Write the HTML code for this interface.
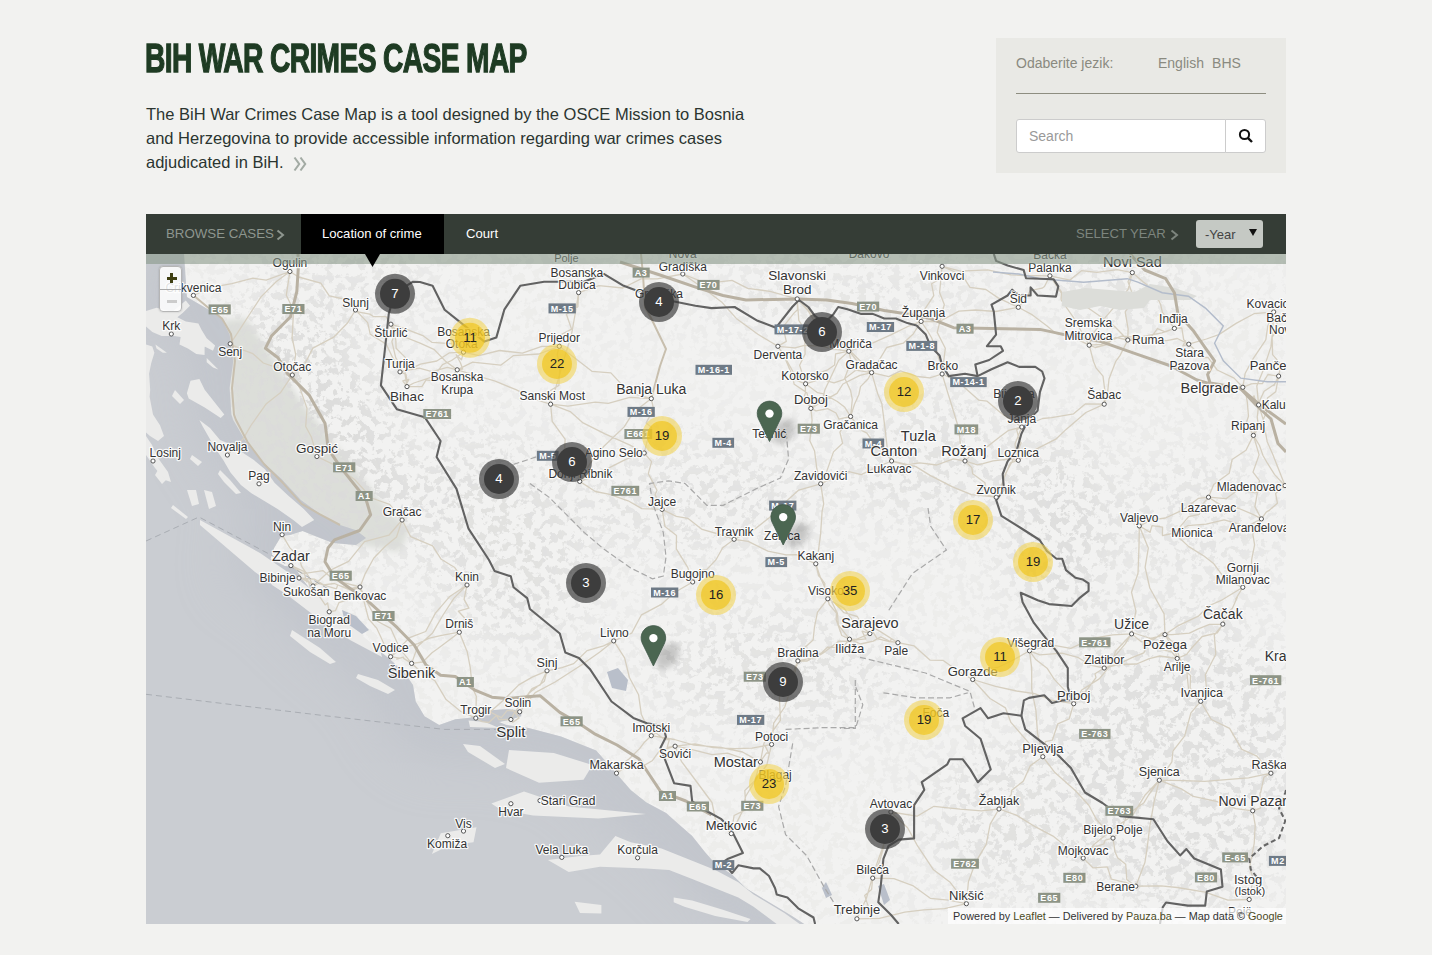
<!DOCTYPE html>
<html><head><meta charset="utf-8">
<style>
*{margin:0;padding:0;box-sizing:border-box}
html,body{width:1432px;height:955px;overflow:hidden;background:#f2f2f0;font-family:"Liberation Sans",sans-serif}
#title{position:absolute;left:145px;top:36px;font-size:40px;font-weight:bold;color:#1e3b23;letter-spacing:-0.9px;-webkit-text-stroke:1.3px #1e3b23;transform:scaleX(0.705);transform-origin:0 0;white-space:nowrap}
#intro{position:absolute;left:146px;top:102px;width:700px;font-size:16.5px;line-height:24px;color:#2b3530}
#intro .more{color:#aaa;font-size:20px;margin-left:6px}
#panel{position:absolute;left:996px;top:38px;width:290px;height:135px;background:#e9e9e5}
#lang{position:absolute;left:20px;top:17px;font-size:14px;color:#8a8a80}
#langs{position:absolute;left:162px;top:17px;font-size:14px;color:#8a8a80;word-spacing:4.3px}
#rule{position:absolute;left:20px;top:55px;width:250px;height:1px;background:#8d8d80}
#search{position:absolute;left:20px;top:81px;width:210px;height:34px;background:#fff;border:1px solid #ccc;border-radius:3px 0 0 3px;font-size:14px;color:#999;padding:8px 0 0 12px}
#sbtn{position:absolute;left:229px;top:81px;width:41px;height:34px;background:#fff;border:1px solid #ccc;border-radius:0 3px 3px 0}
#nav{position:absolute;left:146px;top:214px;width:1140px;height:40px;background:#353d36}
#nav .t{position:absolute;top:0;height:40px;line-height:40px;font-size:14px;white-space:nowrap}
#map{position:absolute;left:146px;top:254px;width:1140px;height:670px;background:#efefed;overflow:hidden}
#mapsvg{position:absolute;left:0;top:0;font-family:"Liberation Sans",sans-serif}
.lb{fill:#333;stroke:#fff;stroke-width:2.5px;stroke-opacity:0.85;paint-order:stroke;stroke-linejoin:round}
#band{position:absolute;left:0;top:0;width:1140px;height:10px;background:rgba(135,150,135,0.58)}
#attr{position:absolute;left:802px;top:654px;width:338px;height:16px;background:rgba(255,255,255,0.7);font-size:10.85px;line-height:16px;color:#333;padding-left:5px;white-space:nowrap}
#attr a{color:#4a4a1e;text-decoration:none}
</style></head><body>
<div id="title">BIH WAR CRIMES CASE MAP</div>
<div id="intro">The BiH War Crimes Case Map is a tool designed by the OSCE Mission to Bosnia<br>and Herzegovina to provide accessible information regarding war crimes cases<br>adjudicated in BiH.</div>
<svg style="position:absolute;left:293px;top:156px" width="16" height="17"><polyline points="1.5,1.5 6.2,8 1.5,14.5" fill="none" stroke="#a3aba4" stroke-width="2.1"/><polyline points="7.5,1.5 12.2,8 7.5,14.5" fill="none" stroke="#a3aba4" stroke-width="2.1"/></svg>
<div id="panel">
<div id="lang">Odaberite jezik:</div>
<div id="langs">English BHS</div>
<div id="rule"></div>
<div id="search">Search</div>
<div id="sbtn"><svg style="position:absolute;left:12px;top:8px" width="16" height="16"><circle cx="6.5" cy="6.5" r="4.6" fill="none" stroke="#111" stroke-width="2"/><line x1="9.8" y1="9.8" x2="14" y2="14" stroke="#111" stroke-width="2.4"/></svg></div>
</div>
<div id="nav">
<div class="t" style="left:20px;color:#8e968f;font-size:13.3px">BROWSE CASES</div>
<svg style="position:absolute;left:130px;top:15px" width="9" height="12"><polyline points="1.5,1.5 7,6 1.5,10.5" fill="none" stroke="#8e968f" stroke-width="2"/></svg>
<div style="position:absolute;left:155px;top:0;width:143px;height:40px;background:#000"></div>
<div class="t" style="left:176px;color:#fff;font-size:13.1px">Location of crime</div>
<div class="t" style="left:320px;color:#fff;font-size:13.1px">Court</div>
<div class="t" style="left:930px;color:#7d857e;font-size:13.1px">SELECT YEAR</div>
<svg style="position:absolute;left:1024px;top:15px" width="9" height="12"><polyline points="1.5,1.5 7,6 1.5,10.5" fill="none" stroke="#7d857e" stroke-width="2"/></svg>
<div style="position:absolute;left:1050px;top:6px;width:67px;height:28px;background:#c5c9c4;border-radius:3px;"></div>
<div class="t" style="left:1059px;color:#444;font-size:13px;top:1px">-Year</div>
<svg style="position:absolute;left:1103px;top:14px" width="9" height="9"><polygon points="0,1 8,1 4,8" fill="#111"/></svg>
</div>
<svg style="position:absolute;left:365px;top:254px;z-index:5" width="16" height="14"><polygon points="0,0 15,0 7.5,13" fill="#000"/></svg>
<div id="map">
<svg id="mapsvg" width="1140" height="670" viewBox="146 254 1140 670">
<defs>
<filter id="blur20" x="-20%" y="-20%" width="140%" height="140%"><feGaussianBlur stdDeviation="28"/></filter>
<filter id="blur8" x="-20%" y="-20%" width="140%" height="140%"><feGaussianBlur stdDeviation="10"/></filter>
<filter id="shadow" x="-50%" y="-50%" width="200%" height="200%"><feGaussianBlur stdDeviation="3"/></filter>
<filter id="terr" x="0" y="0" width="100%" height="100%" color-interpolation-filters="sRGB">
  <feTurbulence type="fractalNoise" baseFrequency="0.12" numOctaves="4" seed="5" result="n"/>
  <feColorMatrix in="n" type="matrix" values="0 0 0 0 0.86  0 0 0 0 0.86  0 0 0 0 0.855  14 0 0 0 -7.0"/>
</filter>
<filter id="mblur" x="-50%" y="-50%" width="200%" height="200%"><feGaussianBlur stdDeviation="25"/></filter>
<mask id="tmask" maskUnits="userSpaceOnUse" x="146" y="254" width="1140" height="670" color-interpolation="sRGB"><rect x="146" y="254" width="1140" height="670" fill="#3c3c3c"/><g filter="url(#mblur)"><ellipse cx="320" cy="430" rx="70" ry="130" fill="#f0f0f0" transform="rotate(-30 320 430)"/><ellipse cx="340" cy="290" rx="90" ry="40" fill="#999" transform="rotate(0 340 290)"/><ellipse cx="500" cy="540" rx="80" ry="110" fill="#bbb" transform="rotate(-30 500 540)"/><ellipse cx="700" cy="500" rx="120" ry="50" fill="#aaa" transform="rotate(0 700 500)"/><ellipse cx="770" cy="670" rx="120" ry="60" fill="#aaa" transform="rotate(0 770 670)"/><ellipse cx="930" cy="460" rx="90" ry="60" fill="#aaa" transform="rotate(0 930 460)"/><ellipse cx="1060" cy="530" rx="50" ry="90" fill="#ddd" transform="rotate(0 1060 530)"/><ellipse cx="1170" cy="760" rx="130" ry="150" fill="#c8c8c8" transform="rotate(0 1170 760)"/><ellipse cx="1020" cy="820" rx="90" ry="70" fill="#bbb" transform="rotate(0 1020 820)"/><ellipse cx="1120" cy="295" rx="60" ry="25" fill="#ccc" transform="rotate(0 1120 295)"/><ellipse cx="850" cy="295" rx="140" ry="28" fill="#999" transform="rotate(0 850 295)"/><ellipse cx="1200" cy="520" rx="80" ry="60" fill="#999" transform="rotate(0 1200 520)"/><ellipse cx="1180" cy="262" rx="120" ry="18" fill="#111" transform="rotate(0 1180 262)"/><ellipse cx="650" cy="380" rx="110" ry="35" fill="#222" transform="rotate(0 650 380)"/><ellipse cx="800" cy="355" rx="90" ry="22" fill="#222" transform="rotate(0 800 355)"/></g></mask>
<clipPath id="landclip"><polygon points="184.0,254.0 186.9,297.1 199.4,304.2 220.7,316.7 229.6,334.5 233.2,361.2 229.6,387.9 231.4,414.6 233.2,420.0 245.7,441.4 261.7,460.9 281.3,478.7 300.8,500.1 320.4,514.3 340.0,525.0 356.0,530.3 366.0,538.0 356.0,545.0 333.0,543.0 315.0,536.0 302.6,531.0 290.0,535.0 281.3,536.0 274.1,548.1 270.6,558.8 284.8,565.9 294.9,567.3 302.2,579.0 314.0,593.7 328.6,608.4 343.3,621.5 357.9,633.3 372.6,645.0 390.2,659.6 404.0,672.0 413.0,685.0 415.7,701.6 424.5,716.2 439.2,725.0 455.3,719.2 470.0,717.7 489.0,710.4 506.6,709.0 521.2,710.4 521.2,716.2 506.6,720.6 499.0,722.0 506.6,725.0 528.6,728.0 540.0,731.0 561.0,736.4 596.2,750.4 630.7,790.0 646.1,802.3 666.1,813.0 679.9,825.3 692.2,836.1 704.5,851.5 715.2,863.7 732.1,874.5 746.0,888.3 761.3,897.5 776.7,906.8 792.0,916.0 804.3,924.0 1286.0,924.0 1286.0,254.0"/></clipPath>
<clipPath id="seaclip"><polygon points="184.0,254.0 186.9,297.1 199.4,304.2 220.7,316.7 229.6,334.5 233.2,361.2 229.6,387.9 231.4,414.6 233.2,420.0 245.7,441.4 261.7,460.9 281.3,478.7 300.8,500.1 320.4,514.3 340.0,525.0 356.0,530.3 366.0,538.0 356.0,545.0 333.0,543.0 315.0,536.0 302.6,531.0 290.0,535.0 281.3,536.0 274.1,548.1 270.6,558.8 284.8,565.9 294.9,567.3 302.2,579.0 314.0,593.7 328.6,608.4 343.3,621.5 357.9,633.3 372.6,645.0 390.2,659.6 404.0,672.0 413.0,685.0 415.7,701.6 424.5,716.2 439.2,725.0 455.3,719.2 470.0,717.7 489.0,710.4 506.6,709.0 521.2,710.4 521.2,716.2 506.6,720.6 499.0,722.0 506.6,725.0 528.6,728.0 540.0,731.0 561.0,736.4 596.2,750.4 630.7,790.0 646.1,802.3 666.1,813.0 679.9,825.3 692.2,836.1 704.5,851.5 715.2,863.7 732.1,874.5 746.0,888.3 761.3,897.5 776.7,906.8 792.0,916.0 804.3,924.0 146.0,924.0 146.0,254.0"/></clipPath>
</defs>
<rect x="146" y="254" width="1140" height="670" fill="#f2f2f1"/>
<polygon points="222.0,320.0 246.0,318.0 268.0,350.0 300.0,400.0 340.0,450.0 380.0,500.0 410.0,530.0 400.0,552.0 360.0,545.0 320.0,520.0 280.0,490.0 250.0,460.0 232.0,420.0 228.0,370.0" fill="#dcded9" filter="url(#shadow)"/>
<g clip-path="url(#landclip)" mask="url(#tmask)"><rect x="146" y="254" width="1140" height="670" filter="url(#terr)"/></g>
<polygon points="184.0,254.0 186.9,297.1 199.4,304.2 220.7,316.7 229.6,334.5 233.2,361.2 229.6,387.9 231.4,414.6 233.2,420.0 245.7,441.4 261.7,460.9 281.3,478.7 300.8,500.1 320.4,514.3 340.0,525.0 356.0,530.3 366.0,538.0 356.0,545.0 333.0,543.0 315.0,536.0 302.6,531.0 290.0,535.0 281.3,536.0 274.1,548.1 270.6,558.8 284.8,565.9 294.9,567.3 302.2,579.0 314.0,593.7 328.6,608.4 343.3,621.5 357.9,633.3 372.6,645.0 390.2,659.6 404.0,672.0 413.0,685.0 415.7,701.6 424.5,716.2 439.2,725.0 455.3,719.2 470.0,717.7 489.0,710.4 506.6,709.0 521.2,710.4 521.2,716.2 506.6,720.6 499.0,722.0 506.6,725.0 528.6,728.0 540.0,731.0 561.0,736.4 596.2,750.4 630.7,790.0 646.1,802.3 666.1,813.0 679.9,825.3 692.2,836.1 704.5,851.5 715.2,863.7 732.1,874.5 746.0,888.3 761.3,897.5 776.7,906.8 792.0,916.0 804.3,924.0 146.0,924.0 146.0,254.0" fill="#cacdd2"/>
<g clip-path="url(#seaclip)"><polyline points="184.0,254.0 186.9,297.1 199.4,304.2 220.7,316.7 229.6,334.5 233.2,361.2 229.6,387.9 231.4,414.6 233.2,420.0 245.7,441.4 261.7,460.9 281.3,478.7 300.8,500.1 320.4,514.3 340.0,525.0 356.0,530.3 366.0,538.0 356.0,545.0 333.0,543.0 315.0,536.0 302.6,531.0 290.0,535.0 281.3,536.0 274.1,548.1 270.6,558.8 284.8,565.9 294.9,567.3 302.2,579.0 314.0,593.7 328.6,608.4 343.3,621.5 357.9,633.3 372.6,645.0 390.2,659.6 404.0,672.0 413.0,685.0 415.7,701.6 424.5,716.2 439.2,725.0 455.3,719.2 470.0,717.7 489.0,710.4 506.6,709.0 521.2,710.4 521.2,716.2 506.6,720.6 499.0,722.0 506.6,725.0 528.6,728.0 540.0,731.0 561.0,736.4 596.2,750.4 630.7,790.0 646.1,802.3 666.1,813.0 679.9,825.3 692.2,836.1 704.5,851.5 715.2,863.7 732.1,874.5 746.0,888.3 761.3,897.5 776.7,906.8 792.0,916.0 804.3,924.0" fill="none" stroke="#b9bdc6" stroke-width="70" filter="url(#blur20)" opacity="0.5"/></g>
<polygon points="146.0,310.9 156.5,307.8 172.2,312.0 185.8,300.5 190.0,305.7 182.6,313.0 177.4,317.2 185.8,321.4 198.4,323.5 201.5,329.8 206.7,338.2 215.1,345.5 213.0,350.7 204.6,346.5 204.6,354.9 196.3,353.9 187.9,348.6 179.5,344.5 180.6,337.1 174.3,336.1 161.7,336.1 152.3,331.9 146.0,326.6" fill="#ebebea"/>
<polygon points="146.0,344.5 152.3,346.5 154.4,352.8 151.2,363.3 149.1,373.8 150.2,390.0 149.6,396.8 153.0,414.6 160.0,425.3 164.0,435.9 158.0,441.0 150.0,436.0 146.0,432.4" fill="#ebebea"/>
<polygon points="155.4,344.5 166.9,352.8 162.8,352.8 156.5,348.6" fill="#ebebea"/>
<polygon points="206.7,358.1 218.3,369.6 213.0,367.5 206.7,362.3" fill="#ebebea"/>
<polygon points="201.0,341.0 206.0,343.0 204.0,348.0" fill="#ebebea"/>
<polygon points="175.0,390.0 184.0,400.0 180.0,404.0 172.0,396.0" fill="#ebebea"/>
<polygon points="192.0,455.0 202.0,462.0 198.0,466.0 190.0,459.0" fill="#ebebea"/>
<polygon points="158.0,470.0 166.0,480.0 162.0,484.0 155.0,475.0" fill="#ebebea"/>
<polygon points="146.0,436.0 152.0,445.0 158.0,458.0 168.0,472.0 171.0,482.0 165.0,480.0 155.0,468.0 146.0,455.0" fill="#ebebea"/>
<polygon points="190.5,380.8 199.4,379.0 204.7,389.7 224.3,414.6 220.7,418.1 204.7,407.5 188.7,398.6 186.9,393.2" fill="#ebebea"/>
<polygon points="199.4,420.0 210.0,428.0 220.0,439.9 232.6,445.1 240.9,451.4 253.5,459.8 265.0,469.2 274.5,482.8 288.1,495.4 303.8,509.0 314.2,520.0 302.0,527.0 293.3,520.0 277.6,509.0 261.9,499.6 251.4,493.3 240.9,484.9 230.5,472.4 223.1,459.8 215.0,448.0 203.0,427.1" fill="#ebebea"/>
<polygon points="220.0,470.0 230.0,480.0 241.0,493.0 236.0,494.0 224.0,482.0 218.0,474.0" fill="#ebebea"/>
<polygon points="173.0,505.0 188.0,517.0 186.0,519.0 171.0,508.0" fill="#ebebea"/>
<polygon points="187.0,490.0 196.0,490.0 199.0,504.0 192.0,506.0" fill="#ebebea"/>
<polygon points="204.0,490.0 212.0,492.0 216.0,506.0 209.0,509.0" fill="#ebebea"/>
<polygon points="200.0,520.0 260.0,553.0 292.0,575.0 336.0,608.0 355.0,630.0 380.0,650.0 382.0,657.0 350.0,640.0 320.0,620.0 290.0,597.0 255.0,572.0 200.0,525.0" fill="#ebebea"/>
<polygon points="262.0,555.0 290.0,575.0 314.0,598.0 352.0,622.0 364.0,636.0 358.0,638.0 330.0,622.0 300.0,603.0 272.0,585.0 258.0,562.0" fill="#ebebea"/>
<polygon points="292.0,630.0 320.0,648.0 336.0,662.0 330.0,664.0 310.0,652.0 290.0,636.0" fill="#ebebea"/>
<polygon points="358.0,674.0 378.0,680.0 395.0,690.0 388.0,694.0 370.0,686.0 356.0,678.0" fill="#ebebea"/>
<polygon points="468.5,720.6 485.0,722.0 499.3,728.0 470.0,727.0" fill="#ebebea"/>
<polygon points="463.0,744.0 480.0,746.0 505.0,764.0 495.0,768.0 468.0,752.0" fill="#ebebea"/>
<polygon points="509.0,750.0 553.8,753.0 592.5,765.0 583.5,779.8 539.0,782.7 506.0,768.0" fill="#ebebea"/>
<polygon points="491.4,803.5 524.0,791.6 568.7,806.5 646.0,814.0 598.4,818.4 533.0,815.5 500.3,809.5" fill="#ebebea"/>
<polygon points="440.8,833.3 476.5,827.3 473.5,842.2 449.7,845.2 431.9,854.0" fill="#ebebea"/>
<polygon points="547.9,860.0 580.0,856.0 600.0,854.5 615.4,836.1 630.7,842.2 661.5,848.4 692.2,860.7 715.2,869.9 738.3,882.2 753.6,894.5 769.0,903.7 784.4,912.9 799.7,924.0 776.7,924.0 753.6,906.8 738.3,897.5 715.2,888.3 692.2,879.1 669.1,869.9 646.1,868.4 600.0,866.8 568.7,872.0" fill="#ebebea"/>
<polygon points="673.7,897.5 692.2,900.6 722.9,909.8 750.6,919.0 747.5,922.1 715.2,916.0 684.5,906.8 673.7,902.2" fill="#ebebea"/>
<polygon points="574.6,901.7 601.4,905.0 601.4,913.6 580.0,913.0" fill="#ebebea"/>
<path d="M1021.8,427.0 L1008.7,430.3 1000.6,436.3 988.1,446.1 971.9,454.3 965.0,461.0 M475.8,718.1 L480.0,716.2 489.1,711.5 501.4,717.6 507.2,710.3 519.7,711.8 M1089.2,345.2 L1093.5,361.5 1096.0,367.8 1103.0,376.1 1104.8,390.3 1104.2,404.2 M1278.6,376.1 L1267.9,374.5 1262.4,383.7 1253.9,383.6 1251.3,383.8 1242.8,387.3 M871.6,372.6 L859.9,375.4 842.9,384.0 837.0,393.4 821.2,402.1 810.9,408.4 M360.0,587.0 L353.4,590.0 350.6,598.9 339.0,602.6 335.6,610.6 329.2,611.8 M1131.6,633.9 L1128.4,638.6 1125.4,643.7 1114.3,656.9 1106.2,661.1 1104.2,668.0 M390.9,324.2 L399.6,335.0 420.1,343.2 434.4,349.7 445.9,361.6 457.2,369.8 M1159.3,780.2 L1144.9,795.3 1132.3,815.8 1113.4,828.6 1094.0,844.5 1083.2,858.1 M1273.7,311.9 L1272.2,335.4 1270.9,346.9 1263.5,369.4 1256.8,385.9 1258.6,404.9 M675.1,746.2 L659.2,751.1 652.2,760.8 643.1,766.0 626.0,767.0 616.5,773.2 M290.9,565.6 L303.3,573.7 323.1,570.7 329.1,575.8 343.5,582.6 360.0,587.0 M550.6,404.2 L570.2,411.6 583.1,422.9 605.5,434.1 630.0,445.1 644.2,453.0 M1174.4,328.4 L1165.2,331.9 1157.5,328.6 1150.4,338.2 1140.9,340.7 1127.8,340.0 M797.2,298.9 L811.0,312.6 823.0,329.7 837.5,338.8 853.8,354.5 871.6,372.6 M289.9,271.5 L276.4,281.5 261.0,296.9 250.1,313.5 237.4,333.1 230.2,343.8 M1132.3,272.6 L1117.0,269.7 1096.9,272.4 1081.5,270.7 1069.9,280.1 1049.9,275.8 M1222.8,624.1 L1217.3,632.9 1202.2,636.5 1192.1,647.5 1186.6,654.4 1177.2,658.5 M1165.0,634.6 L1151.1,638.5 1143.8,652.8 1132.0,657.7 1119.5,663.7 1104.2,668.0 M400.0,371.9 L406.0,374.3 407.2,382.7 408.8,379.4 402.8,380.9 407.0,386.6 M848.8,351.2 L850.3,352.5 859.2,363.8 865.9,363.8 868.6,371.3 871.6,372.6 M1049.9,275.8 L1024.2,275.5 1010.9,274.8 987.7,269.9 960.4,271.1 942.1,266.3 M1021.8,427.0 L1015.0,444.0 1016.3,454.0 1005.5,473.6 1003.6,479.9 996.2,497.2 M869.9,633.6 L862.1,631.2 865.8,638.9 854.1,640.2 858.4,639.7 849.5,639.2 M519.7,711.8 L516.4,713.8 512.5,710.0 519.1,717.9 512.9,722.3 510.9,719.5 M1278.6,376.1 L1273.9,385.6 1273.9,384.7 1264.1,391.3 1260.0,400.0 1258.6,404.9 M360.0,587.0 L363.7,600.1 368.6,619.0 376.9,628.4 385.3,646.8 390.6,656.7 M475.8,718.1 L489.2,712.8 504.3,699.5 518.8,684.9 532.2,677.1 547.0,670.8 M1242.8,587.3 L1222.3,599.8 1208.4,606.0 1198.4,616.2 1178.8,625.3 1165.0,634.6 M1208.5,497.2 L1219.6,504.4 1225.7,506.5 1237.7,508.0 1253.5,514.6 1261.4,518.9 M856.9,918.8 L879.4,918.4 904.8,912.2 923.7,909.8 944.6,908.6 966.4,903.7 M1159.3,780.2 L1154.1,801.7 1149.7,827.0 1147.2,847.6 1144.9,862.6 1135.8,886.2 M682.8,274.0 L706.3,283.4 732.0,280.3 747.7,288.4 770.0,291.3 797.2,298.9 M550.6,404.2 L552.2,421.3 565.1,439.1 564.6,452.7 575.5,462.4 579.7,481.4 M457.2,369.8 L451.0,377.8 434.3,381.0 426.1,379.8 421.9,386.6 407.0,386.6 M355.5,310.0 L359.2,312.2 369.8,314.1 373.7,316.7 386.0,316.6 390.9,324.2 M965.0,461.0 L971.8,467.6 972.7,473.8 985.0,482.8 985.6,494.8 996.2,497.2 M1083.2,858.1 L1092.9,867.8 1107.4,866.9 1111.3,879.2 1126.0,882.6 1135.8,886.2 M1222.8,624.1 L1214.3,635.1 1215.8,654.2 1205.3,674.8 1206.5,688.9 1200.7,701.3 M510.9,719.5 L514.0,713.3 521.0,703.6 532.1,688.7 540.3,684.8 547.0,670.8 M999.0,809.0 L990.2,824.2 986.2,844.3 975.5,862.4 968.4,881.8 966.4,903.7 M1113.0,838.1 L1105.2,840.2 1103.7,844.0 1095.1,846.9 1087.6,849.3 1083.2,858.1 M1104.2,404.2 L1085.2,403.9 1073.6,413.8 1051.7,417.6 1042.6,418.5 1021.8,427.0 M299.0,578.0 L314.4,579.1 323.4,584.9 334.5,583.5 349.7,590.0 360.0,587.0 M1089.2,345.2 L1095.3,347.5 1106.7,344.5 1111.4,340.6 1115.6,337.3 1127.8,340.0 M869.9,633.6 L851.2,641.5 838.7,641.2 822.5,653.4 816.0,657.1 797.9,660.9 M777.9,346.3 L781.3,351.2 786.9,360.9 791.1,368.3 797.7,380.9 805.6,383.8 M942.1,266.3 L962.1,275.0 970.0,287.4 985.9,289.5 998.1,297.9 1018.3,307.3 M1253.4,435.4 L1259.5,445.5 1263.0,455.5 1267.4,463.2 1274.6,474.6 1285.0,485.6 M820.7,483.8 L798.8,490.1 784.1,503.3 769.6,517.4 753.9,529.8 734.1,539.3 M1278.6,376.1 L1275.7,391.8 1267.4,398.1 1268.3,408.2 1260.7,425.0 1253.4,435.4 M1131.6,633.9 L1115.5,651.2 1112.4,663.1 1099.2,678.9 1081.7,690.0 1073.7,703.7 M1270.9,773.2 L1248.6,777.9 1229.3,779.3 1204.8,781.3 1183.4,780.7 1159.3,780.2 M1273.7,311.9 L1254.0,313.7 1236.1,323.4 1218.8,334.6 1206.4,339.0 1188.8,344.2 M942.1,374.0 L947.9,393.2 951.2,403.8 958.8,428.7 960.4,444.0 965.0,461.0 M850.6,416.5 L861.2,430.2 866.9,433.1 875.0,445.0 886.1,453.3 891.6,461.0 M1127.8,340.0 L1141.4,336.6 1148.7,339.2 1166.8,340.6 1177.3,338.5 1188.8,344.2 M771.6,744.4 L765.0,745.6 768.8,753.4 766.6,752.9 762.8,758.1 760.4,762.0 M559.3,346.3 L557.2,354.1 559.8,366.5 558.9,385.4 547.5,392.2 550.6,404.2 M1042.8,756.7 L1030.4,765.6 1023.4,781.0 1011.5,790.6 1011.2,794.7 999.0,809.0 M411.6,663.4 L423.0,673.6 435.0,680.8 446.1,699.6 460.8,711.5 475.8,718.1 M848.8,351.2 L838.7,360.3 833.7,371.0 824.8,390.1 822.3,400.1 810.9,408.4 M849.5,639.2 L860.5,644.0 873.3,641.1 880.7,636.8 890.5,641.5 897.9,642.7 M942.1,266.3 L940.4,278.8 931.6,283.8 933.8,295.6 925.0,308.8 921.1,321.4 M1270.9,773.2 L1263.9,777.3 1260.7,792.3 1260.0,793.0 1260.4,808.2 1252.7,810.8 M1029.5,650.8 L1031.7,668.4 1031.7,689.1 1035.9,710.3 1037.5,733.1 1042.8,756.7 M289.9,271.5 L298.6,277.0 320.8,283.2 329.3,295.9 346.0,299.5 355.5,310.0 M467.0,585.0 L449.4,596.8 435.4,613.1 425.7,631.5 409.6,637.6 390.6,656.7 M850.6,416.5 L839.9,432.1 842.6,443.2 833.5,451.9 825.6,474.6 820.7,483.8 M972.7,679.5 L990.0,698.5 1005.5,707.9 1010.9,722.4 1029.0,743.1 1042.8,756.7 M1132.3,272.6 L1128.1,289.3 1116.5,304.3 1106.0,316.7 1093.2,333.5 1089.2,345.2 M1042.8,756.7 L1054.9,772.6 1075.5,790.7 1088.8,805.3 1096.3,819.3 1113.0,838.1 M402.1,520.0 L388.9,535.2 364.5,541.6 348.6,561.3 330.0,570.4 313.0,586.0 M805.6,383.8 L817.6,392.7 823.6,393.9 837.3,401.5 844.8,407.3 850.6,416.5 M891.6,461.0 L874.6,468.2 861.2,474.6 849.0,471.6 832.1,478.4 820.7,483.8 M1073.7,703.7 L1069.2,718.8 1057.8,723.8 1052.3,740.2 1045.4,741.6 1042.8,756.7 M1131.6,633.9 L1133.9,633.0 1148.9,638.0 1154.0,639.3 1162.6,632.8 1165.0,634.6 M1242.8,587.3 L1235.7,599.0 1237.3,597.3 1232.4,608.2 1225.5,615.1 1222.8,624.1 M519.7,711.8 L535.2,692.6 555.1,682.0 580.7,665.5 599.5,652.2 613.7,640.9 M1159.3,780.2 L1148.6,795.0 1144.0,802.7 1127.0,814.7 1121.0,830.7 1113.0,838.1 M1104.2,668.0 L1095.0,673.8 1096.0,677.6 1085.0,692.5 1082.5,692.0 1073.7,703.7 M290.9,565.6 L290.7,565.3 303.9,571.3 306.6,581.8 307.0,579.6 313.0,586.0 M1174.4,328.4 L1161.9,332.9 1137.9,337.3 1121.4,336.2 1101.3,344.4 1089.2,345.2 M797.2,298.9 L797.5,309.7 793.9,313.1 783.0,327.1 786.3,341.4 777.9,346.3 M827.8,598.8 L835.1,603.3 843.9,612.7 857.3,616.5 864.5,629.0 869.9,633.6 M771.6,744.4 L766.8,765.0 756.6,778.4 745.6,796.5 742.2,811.6 731.3,833.6 M1127.8,340.0 L1120.1,355.4 1115.8,361.3 1109.0,379.0 1107.2,396.2 1104.2,404.2 M1188.8,344.2 L1203.4,357.7 1208.0,357.3 1217.2,370.0 1234.1,378.1 1242.8,387.3 M313.0,586.0 L313.6,590.3 320.7,598.1 325.2,604.9 327.6,602.9 329.2,611.8 M613.7,640.9 L624.6,657.8 629.4,677.5 638.6,694.8 641.3,714.2 651.3,735.7 M1200.7,701.3 L1211.3,719.5 1229.6,728.3 1241.8,749.4 1256.9,756.1 1270.9,773.2 M651.3,398.6 L653.5,409.0 646.1,423.1 651.5,427.3 646.6,443.3 644.2,453.0 M400.0,371.9 L408.6,370.2 419.3,368.1 431.9,371.6 447.3,367.3 457.2,369.8 M848.8,351.2 L829.7,348.5 822.2,346.1 804.4,345.3 795.0,347.8 777.9,346.3 M1021.8,427.0 L1016.7,429.7 1019.4,440.8 1021.1,442.9 1015.6,455.6 1018.3,460.3 M1258.6,404.9 L1263.0,418.9 1267.2,441.7 1272.6,454.0 1278.3,468.6 1285.0,485.6 M1139.3,525.9 L1150.0,532.3 1152.0,525.7 1162.6,527.2 1162.4,535.6 1174.4,533.0 M475.8,718.1 L482.1,721.6 488.9,722.5 496.5,715.6 499.0,719.7 510.9,719.5 M760.4,762.0 L754.8,780.6 744.8,790.5 746.0,809.6 734.1,815.5 731.3,833.6 M890.9,812.0 L917.0,816.2 934.0,806.3 960.0,809.1 981.4,810.8 999.0,809.0 M1252.7,810.8 L1255.2,825.1 1254.2,843.5 1249.6,867.5 1253.2,878.6 1249.2,899.5 M692.7,582.0 L674.1,592.8 661.3,604.4 641.5,614.8 631.7,633.1 613.7,640.9 M1029.5,650.8 L1039.9,654.9 1062.0,653.1 1077.7,657.3 1090.3,665.1 1104.2,668.0 M682.8,274.0 L657.2,278.9 641.0,278.8 622.9,288.0 599.0,285.7 578.6,292.6 M897.9,642.7 L914.2,645.9 930.2,660.2 942.9,660.3 957.8,670.9 972.7,679.5 M1174.4,328.4 L1181.8,327.9 1183.7,339.7 1185.4,341.0 1182.9,345.9 1188.8,344.2 M797.2,298.9 L798.8,320.4 804.7,329.5 805.1,354.1 799.6,365.3 805.6,383.8 M578.6,292.6 L575.6,311.5 571.4,335.0 565.0,356.0 556.2,386.1 550.6,404.2 M827.8,598.8 L829.2,604.5 836.5,613.2 836.2,619.9 841.8,635.5 849.5,639.2 M965.0,461.0 L977.5,464.8 983.0,463.6 993.1,460.9 1009.0,459.0 1018.3,460.3 M292.3,375.0 L300.2,388.9 307.0,408.4 305.7,426.5 311.4,437.0 316.9,456.5 M872.7,878.1 L893.9,878.7 913.4,885.9 930.3,898.3 948.5,900.2 966.4,903.7 M299.0,578.0 L299.9,574.6 299.9,577.7 308.6,582.1 310.3,588.4 313.0,586.0 M651.3,398.6 L633.3,412.4 624.2,426.9 603.4,446.8 590.1,463.4 579.7,481.4 M810.9,408.4 L816.1,410.9 827.7,408.7 836.0,413.0 839.0,419.2 850.6,416.5 M869.9,633.6 L872.9,631.9 877.1,638.6 890.4,641.9 891.3,638.5 897.9,642.7 M1261.4,518.9 L1252.8,534.0 1254.6,544.8 1251.7,559.4 1250.9,576.0 1242.8,587.3 M1113.0,838.1 L1115.0,851.8 1117.6,857.7 1125.7,864.3 1126.8,879.4 1135.8,886.2 M644.2,453.0 L626.4,459.2 622.8,460.8 602.5,471.1 592.7,477.1 579.7,481.4 M519.7,711.8 L528.3,700.3 528.7,693.4 531.6,691.1 544.4,681.2 547.0,670.8 M1029.5,650.8 L1013.2,660.0 1009.2,661.9 997.8,667.5 981.3,669.8 972.7,679.5 M871.6,372.6 L855.7,370.2 843.6,379.6 834.0,382.8 820.9,379.2 805.6,383.8 M390.9,324.2 L406.0,329.2 422.8,335.6 432.1,342.4 453.6,343.8 463.5,352.2 M459.3,632.2 L453.6,636.7 437.6,648.8 432.0,652.8 422.8,662.0 411.6,663.4 M771.6,744.4 L752.0,748.2 735.0,748.7 713.1,747.7 695.1,743.9 675.1,746.2 M559.3,346.3 L574.8,358.0 591.9,371.3 610.9,372.9 629.0,392.4 651.3,398.6 M871.6,372.6 L879.9,358.8 886.7,347.5 903.2,343.2 913.2,334.0 921.1,321.4 M827.8,598.8 L817.5,612.1 814.5,626.8 813.1,640.0 799.5,652.2 797.9,660.9 M1249.2,899.5 L1227.9,900.1 1205.2,892.1 1177.2,887.5 1161.1,885.9 1135.8,886.2 M355.5,310.0 L347.5,323.0 333.7,337.2 312.9,348.1 304.3,364.7 292.3,375.0 M890.9,812.0 L885.7,827.3 884.0,835.6 883.6,847.6 879.5,861.6 872.7,878.1 M457.2,369.8 L472.6,362.1 500.7,365.2 513.5,355.6 538.8,354.0 559.3,346.3 M734.1,539.3 L722.7,547.8 716.0,559.7 706.9,569.4 698.8,570.6 692.7,582.0 M651.3,735.7 L674.4,739.5 694.0,745.2 720.7,747.3 742.5,752.0 760.4,762.0 M1177.2,658.5 L1179.0,664.7 1190.6,675.6 1190.1,688.0 1193.3,692.3 1200.7,701.3 M1174.4,533.0 L1188.4,546.4 1204.3,556.2 1213.9,563.8 1225.7,579.9 1242.8,587.3 M1253.4,435.4 L1246.0,450.2 1232.1,459.5 1229.2,473.3 1213.7,484.5 1208.5,497.2 M644.2,453.0 L651.6,461.7 648.3,473.6 657.0,490.3 655.1,494.7 662.1,509.4 M1029.5,650.8 L1035.8,659.6 1047.4,668.6 1054.3,679.4 1069.6,695.4 1073.7,703.7 M1049.9,275.8 L1061.5,293.3 1077.1,300.3 1101.5,317.3 1114.6,326.5 1127.8,340.0 M1018.3,307.3 L995.8,311.5 975.5,310.0 958.9,311.1 939.5,321.5 921.1,321.4 M682.8,274.0 L703.8,288.5 722.2,302.6 736.3,318.4 757.9,334.2 777.9,346.3 M1285.0,485.6 L1273.8,487.2 1255.1,492.7 1238.3,489.8 1226.0,498.7 1208.5,497.2 M972.7,679.5 L995.6,686.3 1016.6,691.0 1034.7,693.6 1051.6,700.1 1073.7,703.7 M675.1,746.2 L688.1,748.6 712.0,754.7 727.6,753.2 742.6,758.4 760.4,762.0 M1139.3,525.9 L1139.0,546.6 1138.0,573.4 1131.5,592.2 1135.9,611.2 1131.6,633.9 M579.7,481.4 L595.3,491.5 609.8,494.4 628.1,500.8 641.8,508.6 662.1,509.4 M805.6,383.8 L805.2,384.3 805.5,392.6 803.9,397.7 809.0,405.5 810.9,408.4 M651.3,398.6 L629.7,397.4 608.3,403.3 595.3,402.2 567.9,406.1 550.6,404.2 M1104.2,404.2 L1085.9,412.5 1066.1,429.4 1055.8,439.2 1035.2,449.7 1018.3,460.3 M999.0,809.0 L1016.3,815.1 1036.0,827.2 1053.0,836.1 1065.1,845.8 1083.2,858.1 M810.9,408.4 L812.1,420.3 809.8,440.8 814.6,451.1 816.8,468.5 820.7,483.8 M463.5,352.2 L451.5,360.5 442.5,364.6 433.9,376.4 413.9,383.0 407.0,386.6 M1253.4,435.4 L1259.1,454.9 1253.0,472.1 1259.5,480.6 1254.9,506.7 1261.4,518.9 M890.9,812.0 L907.6,827.8 917.1,845.1 933.5,869.8 949.8,881.9 966.4,903.7 M1159.3,780.2 L1182.0,789.2 1193.3,796.4 1216.4,801.4 1235.7,808.6 1252.7,810.8 M871.6,372.6 L868.0,379.0 860.5,386.6 858.9,394.5 854.5,404.2 850.6,416.5 M1018.3,307.3 L1032.4,314.9 1047.1,326.1 1055.9,333.4 1074.7,338.2 1089.2,345.2 M390.9,324.2 L395.8,340.1 396.1,348.3 405.2,357.4 405.2,375.5 407.0,386.6 M1285.0,485.6 L1275.6,493.4 1277.4,503.2 1269.1,510.4 1266.2,512.1 1261.4,518.9 M1208.5,497.2 L1198.6,498.3 1183.0,509.9 1165.4,518.0 1151.8,519.9 1139.3,525.9 M1131.6,633.9 L1141.0,641.5 1146.9,643.1 1158.2,649.2 1171.3,651.5 1177.2,658.5 M613.7,640.9 L603.6,645.9 587.1,650.6 573.7,663.6 561.9,667.7 547.0,670.8 M1222.8,624.1 L1209.5,624.4 1197.7,629.2 1189.5,633.2 1172.0,634.7 1165.0,634.6 M1139.3,525.9 L1148.3,548.1 1145.1,567.4 1149.8,588.0 1164.1,613.9 1165.0,634.6 M282.1,534.7 L289.9,547.9 298.6,556.3 301.8,566.7 308.8,576.7 313.0,586.0 M797.9,660.9 L794.4,674.7 789.1,693.9 784.7,707.0 773.7,723.1 771.6,744.4 M1165.0,634.6 L1170.2,643.5 1171.4,642.8 1175.5,651.8 1175.4,651.3 1177.2,658.5 M815.8,563.8 L820.6,578.1 827.5,593.3 837.4,613.4 838.3,624.8 849.5,639.2 M848.8,351.2 L835.6,353.9 834.6,365.0 827.1,370.2 809.4,376.2 805.6,383.8 M1049.9,275.8 L1044.5,286.5 1042.1,288.2 1030.1,290.7 1026.1,298.1 1018.3,307.3 M1018.3,460.3 L1010.4,462.8 1004.5,476.9 1001.3,487.1 996.5,493.5 996.2,497.2 M871.6,372.6 L877.7,393.8 881.9,403.8 884.9,427.7 887.2,447.6 891.6,461.0 M942.1,266.3 L939.6,292.5 944.3,304.5 937.2,332.4 945.3,348.3 942.1,374.0 M360.0,587.0 L368.4,604.6 377.3,621.2 390.8,628.4 400.0,648.9 411.6,663.4 M848.8,351.2 L862.6,347.0 874.2,342.3 890.8,334.8 907.9,326.5 921.1,321.4 M1208.5,497.2 L1200.5,507.2 1199.3,514.4 1188.7,516.6 1176.8,530.6 1174.4,533.0 M872.7,878.1 L871.6,889.5 864.7,895.4 868.0,905.8 861.1,908.7 856.9,918.8 M891.6,461.0 L905.6,464.9 919.7,462.8 936.7,465.0 953.4,458.8 965.0,461.0 M675.1,746.2 L681.4,761.3 696.8,782.0 712.0,802.5 715.5,819.5 731.3,833.6 M871.6,372.6 L888.8,376.6 900.5,370.9 917.4,376.5 929.8,377.9 942.1,374.0 M1200.7,701.3 L1190.9,712.9 1184.7,735.8 1172.9,751.1 1171.9,761.8 1159.3,780.2 M292.3,375.0 L280.4,392.8 266.0,404.1 250.9,425.5 243.3,438.6 227.4,455.0 M289.9,271.5 L286.3,295.3 293.6,310.2 292.1,337.6 295.7,354.5 292.3,375.0 M662.1,509.4 L676.3,516.3 687.8,518.3 702.1,529.4 718.3,534.0 734.1,539.3 M797.9,660.9 L789.4,681.3 779.4,696.8 780.4,720.3 764.0,743.1 760.4,762.0 M1165.0,634.6 L1175.0,644.5 1180.3,659.7 1186.6,669.8 1188.9,692.9 1200.7,701.3 M457.2,369.8 L479.5,376.5 495.2,381.2 516.0,389.7 536.4,400.0 550.6,404.2 M1261.4,518.9 L1247.2,526.4 1224.1,519.9 1206.2,524.2 1187.6,525.7 1174.4,533.0 M463.5,352.2 L478.9,355.6 499.4,350.5 522.4,353.2 541.8,346.4 559.3,346.3 M942.1,374.0 L957.5,381.2 978.6,400.1 987.1,401.2 1003.4,414.9 1021.8,427.0 M820.7,483.8 L823.7,503.8 822.1,511.3 820.6,533.9 818.2,552.7 815.8,563.8 M1242.8,387.3 L1241.5,387.3 1251.7,398.7 1254.0,395.8 1256.4,404.0 1258.6,404.9 M459.3,632.2 L441.6,635.3 429.4,638.2 417.9,643.6 401.7,648.2 390.6,656.7 M1273.7,311.9 L1278.3,328.6 1272.1,337.1 1272.6,354.7 1281.0,364.5 1278.6,376.1 M1104.2,668.0 L1118.3,664.5 1136.6,664.0 1149.3,658.7 1159.8,656.0 1177.2,658.5 M827.8,598.8 L844.0,608.1 852.3,620.1 867.5,624.3 880.4,631.6 897.9,642.7 M891.6,461.0 L915.9,466.6 930.1,475.4 952.5,486.8 971.4,494.7 996.2,497.2 M289.9,271.5 L266.2,280.2 253.0,278.2 231.8,283.7 210.3,287.6 193.4,295.4 M467.0,585.0 L464.1,599.4 468.9,608.1 458.4,611.2 464.8,618.3 459.3,632.2 M1132.3,272.6 L1143.0,281.7 1153.9,290.1 1160.6,304.5 1162.4,312.3 1174.4,328.4 M355.5,310.0 L367.7,322.6 370.2,334.1 386.3,344.3 391.8,355.9 400.0,371.9 M662.1,509.4 L665.0,526.6 676.5,535.4 676.3,548.8 687.7,567.4 692.7,582.0 M734.1,539.3 L748.2,541.3 767.9,551.2 786.2,554.8 796.5,554.6 815.8,563.8 M921.1,321.4 L927.6,331.0 931.7,338.0 936.8,351.3 941.3,367.1 942.1,374.0 M651.3,735.7 L656.0,733.0 664.9,739.7 669.3,739.7 667.2,747.4 675.1,746.2 M463.5,352.2 L449.5,352.8 436.8,361.0 420.4,364.2 412.2,368.1 400.0,371.9 M402.1,520.0 L410.7,536.7 432.6,545.9 441.2,559.3 454.4,567.2 467.0,585.0 M848.8,351.2 L851.1,361.2 844.7,378.3 850.6,390.6 852.3,399.5 850.6,416.5 M1049.9,275.8 L1061.5,291.9 1061.1,299.8 1073.4,317.4 1079.1,327.5 1089.2,345.2 M777.9,346.3 L783.6,355.1 792.0,374.8 794.2,384.3 806.8,392.6 810.9,408.4 M849.5,639.2 L842.4,647.9 827.7,647.1 821.9,652.5 807.2,661.0 797.9,660.9 M390.9,324.2 L395.5,332.1 391.9,341.6 395.7,357.6 401.2,366.5 400.0,371.9 M578.6,292.6 L577.9,306.8 566.4,314.3 571.6,329.2 560.7,334.8 559.3,346.3 M1242.8,387.3 L1246.2,395.6 1247.3,402.2 1248.5,416.2 1246.5,422.2 1253.4,435.4 M459.3,632.2 L467.3,652.1 470.3,667.9 472.3,687.6 476.3,696.3 475.8,718.1 M1131.6,633.9 L1112.6,634.9 1092.5,638.4 1070.8,648.3 1051.1,644.9 1029.5,650.8 M1273.7,311.9 L1267.7,326.3 1265.8,339.9 1253.2,358.6 1245.2,373.2 1242.8,387.3 M390.6,656.7 L399.4,658.2 396.7,659.0 403.5,657.2 403.6,658.4 411.6,663.4 M230.2,343.8 L240.6,349.1 252.9,353.7 263.3,363.0 283.3,369.9 292.3,375.0 M797.2,298.9 L808.2,310.9 814.9,321.9 827.8,330.8 839.6,340.4 848.8,351.2 M467.0,585.0 L454.0,598.1 442.1,616.5 432.6,632.9 417.8,646.2 411.6,663.4 M1132.3,272.6 L1128.0,281.7 1134.2,299.0 1125.2,311.9 1128.1,328.9 1127.8,340.0 M313.0,586.0 L318.5,583.5 336.4,588.8 337.7,585.0 349.1,588.6 360.0,587.0 M890.9,812.0 L886.9,835.4 881.4,851.0 874.2,871.1 866.4,898.3 856.9,918.8 M1258.6,404.9 L1257.5,415.6 1257.2,416.3 1258.3,426.9 1255.5,428.1 1253.4,435.4 M651.3,735.7 L643.9,742.8 639.6,748.6 629.3,758.8 622.3,763.9 616.5,773.2 M402.1,520.0 L396.6,536.9 385.3,546.2 373.7,558.2 364.9,574.4 360.0,587.0 M316.9,456.5 L334.8,465.1 355.2,480.1 371.5,498.0 389.6,504.3 402.1,520.0 M463.5,352.2 L461.5,359.8 456.1,354.7 460.4,362.7 462.7,369.0 457.2,369.8 M815.8,563.8 L818.6,575.8 820.8,578.0 824.9,583.7 824.0,592.7 827.8,598.8" fill="none" stroke="#d6cfc0" stroke-width="1.3" stroke-linejoin="round"/>
<polygon points="1062.0,292.0 1085.0,288.0 1110.0,290.0 1135.0,292.0 1150.0,284.0 1175.0,288.0 1197.0,296.0 1190.0,300.0 1150.0,300.0 1144.0,308.0 1120.0,310.0 1100.0,306.0 1080.0,310.0 1062.0,306.0" fill="#dcddd9"/>
<polyline points="993.0,272.0 1019.0,274.0 1040.0,278.7 1083.6,282.2 1127.3,278.7 1137.8,282.2 1162.2,292.7 1188.4,296.2 1205.8,308.4 1223.3,325.9 1214.6,343.3 1223.3,360.8 1240.8,378.2 1267.0,381.7 1286.0,381.7" fill="none" stroke="#b3bccb" stroke-width="1.4"/>
<polygon points="607.0,672.0 618.0,668.0 628.0,680.0 626.0,691.0 612.0,688.0" fill="#b9bfca"/>
<polygon points="878.0,886.0 884.0,884.0 890.0,900.0 884.0,905.0" fill="#b9bfca"/>
<polygon points="342.0,610.0 356.0,616.0 369.0,630.0 362.0,634.0 345.0,622.0" fill="#b9bfca"/>
<polygon points="822.0,888.0 826.0,882.0 832.0,895.0 826.0,898.0" fill="#b9bfca"/>
<polyline points="193.0,295.0 208.0,307.5 222.0,318.5 231.0,334.0 235.0,361.0 232.0,388.0 234.0,414.6 236.0,420.0 247.5,442.0 264.0,464.0 282.8,482.8 301.7,503.8 319.5,514.2 340.0,525.0" fill="none" stroke="#c8bfae" stroke-width="2" stroke-linejoin="round"/>
<polyline points="651.3,398.6 660.0,366.0 666.0,349.0 652.0,320.0 645.0,307.0 643.0,275.0 641.0,254.0" fill="none" stroke="#c8bfae" stroke-width="2" stroke-linejoin="round"/>
<polyline points="298.0,254.0 298.4,266.6 296.8,291.7 290.5,316.8 271.7,335.7 265.4,348.3 278.0,357.7 287.4,373.4 309.4,395.4 325.1,423.6 328.2,448.8 340.8,467.6 365.9,499.0 370.6,514.8 359.6,530.5 334.5,539.9 328.0,548.0 325.0,561.7 334.5,577.4 366.0,599.4 397.3,627.7 414.2,645.0 426.0,665.0 440.6,675.2 455.3,676.6 474.3,689.8 491.9,697.2 506.6,698.6 521.2,697.2 540.0,695.7 559.8,712.4 578.9,723.3 595.2,734.2 617.0,745.0 638.8,758.7 649.6,775.0 660.5,791.4 685.8,801.0 711.5,815.0" fill="none" stroke="#b9b1a2" stroke-width="3" stroke-linejoin="round"/>
<polyline points="620.0,262.0 660.0,275.0 700.0,288.6 723.0,295.5 746.0,300.0 796.8,298.9 826.7,300.0 852.0,303.5 884.3,310.5 907.4,313.9 930.4,318.5 953.5,327.7 1040.0,329.4 1064.4,334.6 1101.1,341.6 1136.0,353.8 1171.0,366.0 1197.0,380.0 1214.6,385.2 1240.8,388.7 1260.0,405.0 1286.0,424.0" fill="none" stroke="#b9b1a2" stroke-width="3" stroke-linejoin="round"/>
<polyline points="1130.0,254.0 1144.7,270.0 1165.7,278.7 1174.4,292.7 1177.9,313.6 1193.6,331.1 1205.8,348.6 1214.6,360.8 1207.6,374.7 1210.0,383.0 1240.0,388.0 1256.0,405.0 1271.0,419.0 1278.0,443.5 1286.0,452.0" fill="none" stroke="#b9b1a2" stroke-width="3" stroke-linejoin="round"/>
<polyline points="146,694.3 321.4,715.3 444.2,729.4 496.9,729.4" fill="none" stroke="#a9adb3" stroke-width="1" stroke-dasharray="6,4"/>
<polyline points="146,541 199,517 271,555 330,590" fill="none" stroke="#a9adb3" stroke-width="1" stroke-dasharray="6,4"/>
<polyline points="1286,790 1285.3,792.6 1279,808.3 1285.3,820.8 1279,838.1 1263.3,846 1249.2,858.5 1250.8,869.5 1257,877.4" fill="none" stroke="#666" stroke-width="2" stroke-dasharray="5,3"/>
<polyline points="513.5,464.4 529.9,459.0 538.0,456.3" fill="none" stroke="#a9a9a9" stroke-width="1.2" stroke-dasharray="6,3"/>
<polyline points="529.9,483.5 548.9,497.1 568.0,516.2 584.3,532.5 603.4,548.8 630.6,567.9 652.4,578.8 663.3,576.1 666.0,557.0 663.3,532.5 652.4,502.5 649.7,483.5 668.8,480.8 685.1,483.5 706.9,505.3 723.2,505.3 755.9,488.9 780.4,478.0 788.6,459.0 785.9,429.0" fill="none" stroke="#a9a9a9" stroke-width="1.2" stroke-dasharray="6,3"/>
<polyline points="928.0,508.0 930.7,526.4 946.4,550.0 912.4,573.5 888.8,610.2" fill="none" stroke="#a9a9a9" stroke-width="1.2" stroke-dasharray="6,3"/>
<polyline points="860.0,657.3 925.5,673.0 970.0,691.4 975.0,709.7" fill="none" stroke="#a9a9a9" stroke-width="1.2" stroke-dasharray="6,3"/>
<polyline points="855.3,680.0 855.3,728.5 840.0,728.5" fill="none" stroke="#a9a9a9" stroke-width="1.2" stroke-dasharray="6,3"/>
<polyline points="883.4,692.8 916.6,697.9 949.8,697.9 967.7,692.8" fill="none" stroke="#a9a9a9" stroke-width="1.2" stroke-dasharray="6,3"/>
<polyline points="785.6,729.4 824.2,727.6 855.8,727.6 862.8,704.8 855.8,687.2" fill="none" stroke="#a9a9a9" stroke-width="1.2" stroke-dasharray="6,3"/>
<polyline points="792.7,743.4 785.6,785.5 778.6,806.5 785.6,834.6 806.7,855.7 824.2,887.2 841.8,915.3" fill="none" stroke="#a9a9a9" stroke-width="1.2" stroke-dasharray="6,3"/>
<polyline points="394.8,293.0 388.8,313.7 384.9,349.5 380.9,385.3 396.8,409.2 424.7,417.2 440.6,441.0 436.6,457.0 456.5,488.9 468.5,528.7 489.0,560.0 494.5,570.9 510.8,576.3 513.5,587.2 527.2,598.1 529.9,609.0 559.8,633.5 565.3,652.5 578.9,658.0 589.8,668.9 611.5,701.5 633.3,717.9 646.9,723.3 663.2,726.0 666.0,736.9 660.5,747.8 674.1,783.2 690.5,785.9 692.2,801.5 707.5,811.5 721.4,819.2 730.6,828.4 742.9,853.0 727.5,859.1 722.9,862.2 732.1,873.0 738.3,865.3 753.6,868.4 759.8,868.4 769.0,876.0 775.1,888.3 776.7,894.5 787.4,897.5 798.2,908.3 813.5,917.5 815.1,924.0" fill="none" stroke="#626262" stroke-width="2.1" stroke-linejoin="round"/>
<polyline points="394.8,293.0 412.7,281.8 420.0,282.0 432.6,285.8 444.6,309.7 464.5,325.6 484.4,341.6 496.3,337.6 504.3,309.7 520.2,285.8 544.1,281.8 583.9,281.8 603.8,273.9 623.7,285.8 655.5,297.8 695.4,305.7 711.5,308.1 734.6,307.0 757.6,320.8 776.0,327.7 792.2,307.0 799.0,300.0 808.3,307.0 815.2,316.2 824.4,323.0 833.6,313.9 838.2,307.0 847.5,309.3 861.3,313.9 872.8,313.9 884.3,318.5 895.9,318.5 907.4,323.1 916.6,325.4 925.8,334.6 930.4,346.2 939.6,355.4 941.9,364.6 948.8,376.1 965.0,373.8 977.6,376.1 991.5,369.2 1007.6,362.3 1019.1,366.9 1035.3,366.9 1042.2,371.5 1044.5,378.4 1039.9,392.2 1037.6,410.7 1028.3,419.9 1021.4,433.7 1016.8,449.9 1007.6,461.4 1002.7,474.0 1004.0,489.7 996.2,500.2 1001.4,515.9 1022.4,529.0 1039.6,540.0 1047.1,551.3 1056.5,558.8 1062.2,558.8 1066.0,570.1 1075.4,577.7 1082.9,579.6 1088.6,583.3 1088.6,590.9 1079.1,598.4 1071.6,606.0 1049.0,604.1 1037.7,600.3 1020.7,592.8 1022.6,602.2 1033.9,622.9 1047.1,639.9 1056.5,651.2 1067.8,668.1 1067.8,687.0 1071.6,700.2 1062.2,700.4 1052.0,703.0 1044.3,695.3 1029.0,697.9 1023.9,700.4 1021.4,715.8 1003.5,713.2 988.1,718.3 980.5,708.1 962.6,718.3 965.2,726.0 980.5,738.7 990.7,769.4 977.9,782.2 970.3,769.4 962.6,759.2 949.8,759.2 947.3,764.3 921.7,782.2 924.3,789.8 914.1,805.2 914.1,838.4 898.7,839.6 888.5,846.0 883.4,858.8 880.9,884.3 878.3,902.2 891.1,915.0 898.7,924.0" fill="none" stroke="#626262" stroke-width="2.1" stroke-linejoin="round"/>
<polyline points="977.6,376.1 975.3,364.6 989.2,360.0 1003.0,350.8 1000.7,346.2 986.9,346.2 996.1,334.6 993.8,311.6 991.5,304.7 1007.6,295.5 1012.2,289.7 1019.1,295.5 1030.6,295.5 1030.6,287.4 1037.6,295.5 1056.0,296.6 1058.3,286.3 1053.7,279.3 1026.0,278.2 1023.7,270.1 1007.6,265.5 996.1,260.9 993.8,254.0" fill="none" stroke="#626262" stroke-width="2.1" stroke-linejoin="round"/>
<polyline points="1021.4,715.8 1025.3,729.4 1056.9,753.9 1070.9,768.0 1085.0,792.5 1102.5,803.0 1120.4,816.1 1153.4,819.3 1167.5,841.2 1180.1,855.4 1186.4,849.1 1194.2,858.5 1220.9,869.5 1222.5,886.8 1206.8,891.5 1205.2,905.6 1187.9,905.6 1166.0,902.5 1162.8,907.2 1160.0,924.0" fill="none" stroke="#626262" stroke-width="2.1" stroke-linejoin="round"/>
<rect x="208.6" y="304.4" width="22.2" height="10" fill="#8d9486"/>
<text x="219.7" y="312.7" font-size="9" font-weight="bold" letter-spacing="0.6" fill="#fff" text-anchor="middle">E65</text>
<rect x="282.3" y="304.0" width="22.2" height="10" fill="#8d9486"/>
<text x="293.4" y="312.3" font-size="9" font-weight="bold" letter-spacing="0.6" fill="#fff" text-anchor="middle">E71</text>
<rect x="423.3" y="409.0" width="27.8" height="10" fill="#8d9486"/>
<text x="437.2" y="417.3" font-size="9" font-weight="bold" letter-spacing="0.6" fill="#fff" text-anchor="middle">E761</text>
<rect x="333.1" y="462.3" width="22.2" height="10" fill="#8d9486"/>
<text x="344.2" y="470.6" font-size="9" font-weight="bold" letter-spacing="0.6" fill="#fff" text-anchor="middle">E71</text>
<rect x="355.6" y="491.0" width="17.1" height="10" fill="#8d9486"/>
<text x="364.2" y="499.3" font-size="9" font-weight="bold" letter-spacing="0.6" fill="#fff" text-anchor="middle">A1</text>
<rect x="329.6" y="570.7" width="22.2" height="10" fill="#8d9486"/>
<text x="340.7" y="579.0" font-size="9" font-weight="bold" letter-spacing="0.6" fill="#fff" text-anchor="middle">E65</text>
<rect x="632.6" y="267.6" width="17.1" height="10" fill="#8d9486"/>
<text x="641.1" y="275.9" font-size="9" font-weight="bold" letter-spacing="0.6" fill="#fff" text-anchor="middle">A3</text>
<rect x="697.4" y="279.9" width="22.2" height="10" fill="#8d9486"/>
<text x="708.5" y="288.2" font-size="9" font-weight="bold" letter-spacing="0.6" fill="#fff" text-anchor="middle">E70</text>
<rect x="857.0" y="301.6" width="22.2" height="10" fill="#8d9486"/>
<text x="868.1" y="309.9" font-size="9" font-weight="bold" letter-spacing="0.6" fill="#fff" text-anchor="middle">E70</text>
<rect x="548.5" y="303.4" width="27.3" height="10" fill="#6e7a86"/>
<text x="562.1" y="311.7" font-size="9" font-weight="bold" letter-spacing="0.6" fill="#fff" text-anchor="middle">M-15</text>
<rect x="774.5" y="324.4" width="36.5" height="10" fill="#6e7a86"/>
<text x="792.7" y="332.7" font-size="9" font-weight="bold" letter-spacing="0.6" fill="#fff" text-anchor="middle">M-17-2</text>
<rect x="866.8" y="322.0" width="27.3" height="10" fill="#6e7a86"/>
<text x="880.4" y="330.3" font-size="9" font-weight="bold" letter-spacing="0.6" fill="#fff" text-anchor="middle">M-17</text>
<rect x="695.5" y="364.8" width="36.5" height="10" fill="#6e7a86"/>
<text x="713.7" y="373.1" font-size="9" font-weight="bold" letter-spacing="0.6" fill="#fff" text-anchor="middle">M-16-1</text>
<rect x="627.5" y="406.9" width="27.3" height="10" fill="#6e7a86"/>
<text x="641.1" y="415.2" font-size="9" font-weight="bold" letter-spacing="0.6" fill="#fff" text-anchor="middle">M-16</text>
<rect x="797.7" y="423.7" width="22.2" height="10" fill="#8d9486"/>
<text x="808.8" y="432.0" font-size="9" font-weight="bold" letter-spacing="0.6" fill="#fff" text-anchor="middle">E73</text>
<rect x="624.4" y="429.0" width="27.8" height="10" fill="#8d9486"/>
<text x="638.3" y="437.3" font-size="9" font-weight="bold" letter-spacing="0.6" fill="#fff" text-anchor="middle">E661</text>
<rect x="712.4" y="437.8" width="21.7" height="10" fill="#6e7a86"/>
<text x="723.2" y="446.1" font-size="9" font-weight="bold" letter-spacing="0.6" fill="#fff" text-anchor="middle">M-4</text>
<rect x="862.5" y="438.5" width="21.7" height="10" fill="#6e7a86"/>
<text x="873.4" y="446.8" font-size="9" font-weight="bold" letter-spacing="0.6" fill="#fff" text-anchor="middle">M-4</text>
<rect x="536.9" y="450.8" width="21.7" height="10" fill="#6e7a86"/>
<text x="547.8" y="459.1" font-size="9" font-weight="bold" letter-spacing="0.6" fill="#fff" text-anchor="middle">M-5</text>
<rect x="611.4" y="485.8" width="27.8" height="10" fill="#8d9486"/>
<text x="625.3" y="494.1" font-size="9" font-weight="bold" letter-spacing="0.6" fill="#fff" text-anchor="middle">E761</text>
<rect x="769.1" y="500.6" width="27.3" height="10" fill="#6e7a86"/>
<text x="782.8" y="508.9" font-size="9" font-weight="bold" letter-spacing="0.6" fill="#fff" text-anchor="middle">M-17</text>
<rect x="765.4" y="557.1" width="21.7" height="10" fill="#6e7a86"/>
<text x="776.2" y="565.4" font-size="9" font-weight="bold" letter-spacing="0.6" fill="#fff" text-anchor="middle">M-5</text>
<rect x="956.5" y="323.7" width="17.1" height="10" fill="#8d9486"/>
<text x="965.0" y="332.0" font-size="9" font-weight="bold" letter-spacing="0.6" fill="#fff" text-anchor="middle">A3</text>
<rect x="906.3" y="340.9" width="30.9" height="10" fill="#6e7a86"/>
<text x="921.8" y="349.2" font-size="9" font-weight="bold" letter-spacing="0.6" fill="#fff" text-anchor="middle">M-1-8</text>
<rect x="950.2" y="377.1" width="36.5" height="10" fill="#6e7a86"/>
<text x="968.5" y="385.4" font-size="9" font-weight="bold" letter-spacing="0.6" fill="#fff" text-anchor="middle">M-14-1</text>
<rect x="954.5" y="424.4" width="23.7" height="10" fill="#8d9486"/>
<text x="966.4" y="432.7" font-size="9" font-weight="bold" letter-spacing="0.6" fill="#fff" text-anchor="middle">M18</text>
<rect x="372.4" y="611.0" width="22.2" height="10" fill="#8d9486"/>
<text x="383.5" y="619.3" font-size="9" font-weight="bold" letter-spacing="0.6" fill="#fff" text-anchor="middle">E71</text>
<rect x="456.8" y="677.0" width="17.1" height="10" fill="#8d9486"/>
<text x="465.3" y="685.3" font-size="9" font-weight="bold" letter-spacing="0.6" fill="#fff" text-anchor="middle">A1</text>
<rect x="651.0" y="587.5" width="27.3" height="10" fill="#6e7a86"/>
<text x="664.6" y="595.8" font-size="9" font-weight="bold" letter-spacing="0.6" fill="#fff" text-anchor="middle">M-16</text>
<rect x="743.7" y="671.7" width="22.2" height="10" fill="#8d9486"/>
<text x="754.8" y="680.0" font-size="9" font-weight="bold" letter-spacing="0.6" fill="#fff" text-anchor="middle">E73</text>
<rect x="560.5" y="716.3" width="22.2" height="10" fill="#8d9486"/>
<text x="571.6" y="724.6" font-size="9" font-weight="bold" letter-spacing="0.6" fill="#fff" text-anchor="middle">E65</text>
<rect x="737.0" y="714.9" width="27.3" height="10" fill="#6e7a86"/>
<text x="750.6" y="723.2" font-size="9" font-weight="bold" letter-spacing="0.6" fill="#fff" text-anchor="middle">M-17</text>
<rect x="658.9" y="791.0" width="17.1" height="10" fill="#8d9486"/>
<text x="667.4" y="799.3" font-size="9" font-weight="bold" letter-spacing="0.6" fill="#fff" text-anchor="middle">A1</text>
<rect x="686.8" y="801.5" width="22.2" height="10" fill="#8d9486"/>
<text x="697.9" y="809.8" font-size="9" font-weight="bold" letter-spacing="0.6" fill="#fff" text-anchor="middle">E65</text>
<rect x="741.2" y="800.8" width="22.2" height="10" fill="#8d9486"/>
<text x="752.3" y="809.1" font-size="9" font-weight="bold" letter-spacing="0.6" fill="#fff" text-anchor="middle">E73</text>
<rect x="712.6" y="860.1" width="21.7" height="10" fill="#6e7a86"/>
<text x="723.5" y="868.4" font-size="9" font-weight="bold" letter-spacing="0.6" fill="#fff" text-anchor="middle">M-2</text>
<rect x="1079.1" y="637.3" width="31.4" height="10" fill="#8d9486"/>
<text x="1094.8" y="645.6" font-size="9" font-weight="bold" letter-spacing="0.6" fill="#fff" text-anchor="middle">E-761</text>
<rect x="1249.9" y="675.2" width="31.4" height="10" fill="#8d9486"/>
<text x="1265.6" y="683.5" font-size="9" font-weight="bold" letter-spacing="0.6" fill="#fff" text-anchor="middle">E-761</text>
<rect x="1079.1" y="728.9" width="31.4" height="10" fill="#8d9486"/>
<text x="1094.8" y="737.2" font-size="9" font-weight="bold" letter-spacing="0.6" fill="#fff" text-anchor="middle">E-763</text>
<rect x="1105.4" y="805.8" width="27.8" height="10" fill="#8d9486"/>
<text x="1119.3" y="814.1" font-size="9" font-weight="bold" letter-spacing="0.6" fill="#fff" text-anchor="middle">E763</text>
<rect x="1222.2" y="852.4" width="25.8" height="10" fill="#8d9486"/>
<text x="1235.1" y="860.7" font-size="9" font-weight="bold" letter-spacing="0.6" fill="#fff" text-anchor="middle">E-65</text>
<rect x="1268.9" y="855.9" width="18.1" height="10" fill="#6e7a86"/>
<text x="1277.9" y="864.2" font-size="9" font-weight="bold" letter-spacing="0.6" fill="#fff" text-anchor="middle">M2</text>
<rect x="951.1" y="858.7" width="27.8" height="10" fill="#8d9486"/>
<text x="965.0" y="867.0" font-size="9" font-weight="bold" letter-spacing="0.6" fill="#fff" text-anchor="middle">E762</text>
<rect x="1063.3" y="872.8" width="22.2" height="10" fill="#8d9486"/>
<text x="1074.4" y="881.1" font-size="9" font-weight="bold" letter-spacing="0.6" fill="#fff" text-anchor="middle">E80</text>
<rect x="1194.9" y="872.4" width="22.2" height="10" fill="#8d9486"/>
<text x="1206.0" y="880.7" font-size="9" font-weight="bold" letter-spacing="0.6" fill="#fff" text-anchor="middle">E80</text>
<rect x="1038.1" y="892.8" width="22.2" height="10" fill="#8d9486"/>
<text x="1049.2" y="901.1" font-size="9" font-weight="bold" letter-spacing="0.6" fill="#fff" text-anchor="middle">E65</text>
<circle cx="289.9" cy="271.5" r="2.1" fill="#fff" stroke="#555" stroke-width="1"/>
<circle cx="193.4" cy="295.4" r="2.1" fill="#fff" stroke="#555" stroke-width="1"/>
<circle cx="355.5" cy="310.0" r="2.1" fill="#fff" stroke="#555" stroke-width="1"/>
<circle cx="171.3" cy="334.0" r="2.1" fill="#fff" stroke="#555" stroke-width="1"/>
<circle cx="390.9" cy="324.2" r="2.1" fill="#fff" stroke="#555" stroke-width="1"/>
<circle cx="230.2" cy="343.8" r="2.1" fill="#fff" stroke="#555" stroke-width="1"/>
<circle cx="463.5" cy="352.2" r="2.1" fill="#fff" stroke="#555" stroke-width="1"/>
<circle cx="400.0" cy="371.9" r="2.1" fill="#fff" stroke="#555" stroke-width="1"/>
<circle cx="292.3" cy="375.0" r="2.1" fill="#fff" stroke="#555" stroke-width="1"/>
<circle cx="457.2" cy="369.8" r="2.1" fill="#fff" stroke="#555" stroke-width="1"/>
<circle cx="407.0" cy="386.6" r="2.1" fill="#fff" stroke="#555" stroke-width="1"/>
<circle cx="153.0" cy="461.0" r="2.1" fill="#fff" stroke="#555" stroke-width="1"/>
<circle cx="227.4" cy="455.0" r="2.1" fill="#fff" stroke="#555" stroke-width="1"/>
<circle cx="316.9" cy="456.5" r="2.1" fill="#fff" stroke="#555" stroke-width="1"/>
<circle cx="259.0" cy="483.8" r="2.1" fill="#fff" stroke="#555" stroke-width="1"/>
<circle cx="402.1" cy="520.0" r="2.1" fill="#fff" stroke="#555" stroke-width="1"/>
<circle cx="282.1" cy="534.7" r="2.1" fill="#fff" stroke="#555" stroke-width="1"/>
<circle cx="290.9" cy="565.6" r="2.1" fill="#fff" stroke="#555" stroke-width="1"/>
<circle cx="299.0" cy="578.0" r="2.1" fill="#fff" stroke="#555" stroke-width="1"/>
<circle cx="467.0" cy="585.0" r="2.1" fill="#fff" stroke="#555" stroke-width="1"/>
<circle cx="682.8" cy="274.0" r="2.1" fill="#fff" stroke="#555" stroke-width="1"/>
<circle cx="578.6" cy="292.6" r="2.1" fill="#fff" stroke="#555" stroke-width="1"/>
<circle cx="797.2" cy="298.9" r="2.1" fill="#fff" stroke="#555" stroke-width="1"/>
<circle cx="559.3" cy="346.3" r="2.1" fill="#fff" stroke="#555" stroke-width="1"/>
<circle cx="848.8" cy="351.2" r="2.1" fill="#fff" stroke="#555" stroke-width="1"/>
<circle cx="777.9" cy="346.3" r="2.1" fill="#fff" stroke="#555" stroke-width="1"/>
<circle cx="871.6" cy="372.6" r="2.1" fill="#fff" stroke="#555" stroke-width="1"/>
<circle cx="805.6" cy="383.8" r="2.1" fill="#fff" stroke="#555" stroke-width="1"/>
<circle cx="651.3" cy="398.6" r="2.1" fill="#fff" stroke="#555" stroke-width="1"/>
<circle cx="550.6" cy="404.2" r="2.1" fill="#fff" stroke="#555" stroke-width="1"/>
<circle cx="810.9" cy="408.4" r="2.1" fill="#fff" stroke="#555" stroke-width="1"/>
<circle cx="850.6" cy="416.5" r="2.1" fill="#fff" stroke="#555" stroke-width="1"/>
<circle cx="644.2" cy="453.0" r="2.1" fill="#fff" stroke="#555" stroke-width="1"/>
<circle cx="891.6" cy="461.0" r="2.1" fill="#fff" stroke="#555" stroke-width="1"/>
<circle cx="579.7" cy="481.4" r="2.1" fill="#fff" stroke="#555" stroke-width="1"/>
<circle cx="820.7" cy="483.8" r="2.1" fill="#fff" stroke="#555" stroke-width="1"/>
<circle cx="662.1" cy="509.4" r="2.1" fill="#fff" stroke="#555" stroke-width="1"/>
<circle cx="734.1" cy="539.3" r="2.1" fill="#fff" stroke="#555" stroke-width="1"/>
<circle cx="815.8" cy="563.8" r="2.1" fill="#fff" stroke="#555" stroke-width="1"/>
<circle cx="692.7" cy="582.0" r="2.1" fill="#fff" stroke="#555" stroke-width="1"/>
<circle cx="1132.3" cy="272.6" r="2.1" fill="#fff" stroke="#555" stroke-width="1"/>
<circle cx="1049.9" cy="275.8" r="2.1" fill="#fff" stroke="#555" stroke-width="1"/>
<circle cx="942.1" cy="266.3" r="2.1" fill="#fff" stroke="#555" stroke-width="1"/>
<circle cx="1018.3" cy="307.3" r="2.1" fill="#fff" stroke="#555" stroke-width="1"/>
<circle cx="1273.7" cy="311.9" r="2.1" fill="#fff" stroke="#555" stroke-width="1"/>
<circle cx="921.1" cy="321.4" r="2.1" fill="#fff" stroke="#555" stroke-width="1"/>
<circle cx="1174.4" cy="328.4" r="2.1" fill="#fff" stroke="#555" stroke-width="1"/>
<circle cx="1089.2" cy="345.2" r="2.1" fill="#fff" stroke="#555" stroke-width="1"/>
<circle cx="1127.8" cy="340.0" r="2.1" fill="#fff" stroke="#555" stroke-width="1"/>
<circle cx="1188.8" cy="344.2" r="2.1" fill="#fff" stroke="#555" stroke-width="1"/>
<circle cx="1278.6" cy="376.1" r="2.1" fill="#fff" stroke="#555" stroke-width="1"/>
<circle cx="942.1" cy="374.0" r="2.1" fill="#fff" stroke="#555" stroke-width="1"/>
<circle cx="1242.8" cy="387.3" r="2.1" fill="#fff" stroke="#555" stroke-width="1"/>
<circle cx="1104.2" cy="404.2" r="2.1" fill="#fff" stroke="#555" stroke-width="1"/>
<circle cx="1258.6" cy="404.9" r="2.1" fill="#fff" stroke="#555" stroke-width="1"/>
<circle cx="1021.8" cy="427.0" r="2.1" fill="#fff" stroke="#555" stroke-width="1"/>
<circle cx="1253.4" cy="435.4" r="2.1" fill="#fff" stroke="#555" stroke-width="1"/>
<circle cx="965.0" cy="461.0" r="2.1" fill="#fff" stroke="#555" stroke-width="1"/>
<circle cx="1018.3" cy="460.3" r="2.1" fill="#fff" stroke="#555" stroke-width="1"/>
<circle cx="996.2" cy="497.2" r="2.1" fill="#fff" stroke="#555" stroke-width="1"/>
<circle cx="1285.0" cy="485.6" r="2.1" fill="#fff" stroke="#555" stroke-width="1"/>
<circle cx="1208.5" cy="497.2" r="2.1" fill="#fff" stroke="#555" stroke-width="1"/>
<circle cx="1139.3" cy="525.9" r="2.1" fill="#fff" stroke="#555" stroke-width="1"/>
<circle cx="1261.4" cy="518.9" r="2.1" fill="#fff" stroke="#555" stroke-width="1"/>
<circle cx="1174.4" cy="533.0" r="2.1" fill="#fff" stroke="#555" stroke-width="1"/>
<circle cx="1242.8" cy="587.3" r="2.1" fill="#fff" stroke="#555" stroke-width="1"/>
<circle cx="313.0" cy="586.0" r="2.1" fill="#fff" stroke="#555" stroke-width="1"/>
<circle cx="360.0" cy="587.0" r="2.1" fill="#fff" stroke="#555" stroke-width="1"/>
<circle cx="329.2" cy="611.8" r="2.1" fill="#fff" stroke="#555" stroke-width="1"/>
<circle cx="459.3" cy="632.2" r="2.1" fill="#fff" stroke="#555" stroke-width="1"/>
<circle cx="390.6" cy="656.7" r="2.1" fill="#fff" stroke="#555" stroke-width="1"/>
<circle cx="411.6" cy="663.4" r="2.1" fill="#fff" stroke="#555" stroke-width="1"/>
<circle cx="475.8" cy="718.1" r="2.1" fill="#fff" stroke="#555" stroke-width="1"/>
<circle cx="519.7" cy="711.8" r="2.1" fill="#fff" stroke="#555" stroke-width="1"/>
<circle cx="510.9" cy="719.5" r="2.1" fill="#fff" stroke="#555" stroke-width="1"/>
<circle cx="510.9" cy="803.7" r="2.1" fill="#fff" stroke="#555" stroke-width="1"/>
<circle cx="463.5" cy="831.1" r="2.1" fill="#fff" stroke="#555" stroke-width="1"/>
<circle cx="447.8" cy="835.7" r="2.1" fill="#fff" stroke="#555" stroke-width="1"/>
<circle cx="827.8" cy="598.8" r="2.1" fill="#fff" stroke="#555" stroke-width="1"/>
<circle cx="869.9" cy="633.6" r="2.1" fill="#fff" stroke="#555" stroke-width="1"/>
<circle cx="613.7" cy="640.9" r="2.1" fill="#fff" stroke="#555" stroke-width="1"/>
<circle cx="849.5" cy="639.2" r="2.1" fill="#fff" stroke="#555" stroke-width="1"/>
<circle cx="897.9" cy="642.7" r="2.1" fill="#fff" stroke="#555" stroke-width="1"/>
<circle cx="797.9" cy="660.9" r="2.1" fill="#fff" stroke="#555" stroke-width="1"/>
<circle cx="547.0" cy="670.8" r="2.1" fill="#fff" stroke="#555" stroke-width="1"/>
<circle cx="651.3" cy="735.7" r="2.1" fill="#fff" stroke="#555" stroke-width="1"/>
<circle cx="771.6" cy="744.4" r="2.1" fill="#fff" stroke="#555" stroke-width="1"/>
<circle cx="675.1" cy="746.2" r="2.1" fill="#fff" stroke="#555" stroke-width="1"/>
<circle cx="760.4" cy="762.0" r="2.1" fill="#fff" stroke="#555" stroke-width="1"/>
<circle cx="616.5" cy="773.2" r="2.1" fill="#fff" stroke="#555" stroke-width="1"/>
<circle cx="540.0" cy="800.6" r="2.1" fill="#fff" stroke="#555" stroke-width="1"/>
<circle cx="890.9" cy="812.0" r="2.1" fill="#fff" stroke="#555" stroke-width="1"/>
<circle cx="731.3" cy="833.6" r="2.1" fill="#fff" stroke="#555" stroke-width="1"/>
<circle cx="561.8" cy="857.4" r="2.1" fill="#fff" stroke="#555" stroke-width="1"/>
<circle cx="637.6" cy="857.8" r="2.1" fill="#fff" stroke="#555" stroke-width="1"/>
<circle cx="872.7" cy="878.1" r="2.1" fill="#fff" stroke="#555" stroke-width="1"/>
<circle cx="856.9" cy="918.8" r="2.1" fill="#fff" stroke="#555" stroke-width="1"/>
<circle cx="1222.8" cy="624.1" r="2.1" fill="#fff" stroke="#555" stroke-width="1"/>
<circle cx="1131.6" cy="633.9" r="2.1" fill="#fff" stroke="#555" stroke-width="1"/>
<circle cx="1029.5" cy="650.8" r="2.1" fill="#fff" stroke="#555" stroke-width="1"/>
<circle cx="1165.0" cy="634.6" r="2.1" fill="#fff" stroke="#555" stroke-width="1"/>
<circle cx="1104.2" cy="668.0" r="2.1" fill="#fff" stroke="#555" stroke-width="1"/>
<circle cx="1177.2" cy="658.5" r="2.1" fill="#fff" stroke="#555" stroke-width="1"/>
<circle cx="972.7" cy="679.5" r="2.1" fill="#fff" stroke="#555" stroke-width="1"/>
<circle cx="1200.7" cy="701.3" r="2.1" fill="#fff" stroke="#555" stroke-width="1"/>
<circle cx="1073.7" cy="703.7" r="2.1" fill="#fff" stroke="#555" stroke-width="1"/>
<circle cx="1042.8" cy="756.7" r="2.1" fill="#fff" stroke="#555" stroke-width="1"/>
<circle cx="1270.9" cy="773.2" r="2.1" fill="#fff" stroke="#555" stroke-width="1"/>
<circle cx="1159.3" cy="780.2" r="2.1" fill="#fff" stroke="#555" stroke-width="1"/>
<circle cx="999.0" cy="809.0" r="2.1" fill="#fff" stroke="#555" stroke-width="1"/>
<circle cx="1252.7" cy="810.8" r="2.1" fill="#fff" stroke="#555" stroke-width="1"/>
<circle cx="1113.0" cy="838.1" r="2.1" fill="#fff" stroke="#555" stroke-width="1"/>
<circle cx="1083.2" cy="858.1" r="2.1" fill="#fff" stroke="#555" stroke-width="1"/>
<circle cx="1249.2" cy="899.5" r="2.1" fill="#fff" stroke="#555" stroke-width="1"/>
<circle cx="1135.8" cy="886.2" r="2.1" fill="#fff" stroke="#555" stroke-width="1"/>
<circle cx="966.4" cy="903.7" r="2.1" fill="#fff" stroke="#555" stroke-width="1"/>
<text x="289.9" y="267.1" font-size="12" text-anchor="middle" class="lb">Ogulin</text>
<text x="193.4" y="291.6" font-size="12" text-anchor="middle" class="lb">Crikvenica</text>
<text x="355.5" y="306.7" font-size="12" text-anchor="middle" class="lb">Slunj</text>
<text x="171.3" y="330.2" font-size="12" text-anchor="middle" class="lb">Krk</text>
<text x="390.9" y="336.5" font-size="12" text-anchor="middle" class="lb">Šturlić</text>
<text x="230.2" y="355.8" font-size="12" text-anchor="middle" class="lb">Senj</text>
<text x="463.5" y="336.2" font-size="12" text-anchor="middle" class="lb">Bosanska</text>
<text x="461.8" y="347.8" font-size="12" text-anchor="middle" class="lb">Otoka</text>
<text x="400.0" y="368.1" font-size="12" text-anchor="middle" class="lb">Turija</text>
<text x="292.3" y="371.3" font-size="12" text-anchor="middle" class="lb">Otočac</text>
<text x="457.2" y="381.1" font-size="12" text-anchor="middle" class="lb">Bosanska</text>
<text x="457.2" y="393.7" font-size="12" text-anchor="middle" class="lb">Krupa</text>
<text x="407.0" y="400.7" font-size="13.5" text-anchor="middle" class="lb">Bihac</text>
<text x="165.3" y="456.5" font-size="12" text-anchor="middle" class="lb">Losinj</text>
<text x="227.4" y="451.3" font-size="12" text-anchor="middle" class="lb">Novalja</text>
<text x="316.9" y="452.9" font-size="13.5" text-anchor="middle" class="lb">Gospić</text>
<text x="259.0" y="480.1" font-size="12" text-anchor="middle" class="lb">Pag</text>
<text x="402.1" y="516.2" font-size="12" text-anchor="middle" class="lb">Gračac</text>
<text x="282.1" y="530.6" font-size="12" text-anchor="middle" class="lb">Nin</text>
<text x="290.9" y="561.0" font-size="14.5" text-anchor="middle" class="lb">Zadar</text>
<text x="277.6" y="581.8" font-size="12" text-anchor="middle" class="lb">Bibinje</text>
<text x="467.0" y="581.1" font-size="12" text-anchor="middle" class="lb">Knin</text>
<text x="566.4" y="261.5" font-size="11" text-anchor="middle" class="lb">Polje</text>
<text x="682.8" y="258.3" font-size="12" text-anchor="middle" class="lb">Nova</text>
<text x="682.8" y="270.6" font-size="12" text-anchor="middle" class="lb">Gradiška</text>
<text x="869.0" y="258.3" font-size="12" text-anchor="middle" class="lb">Đakovo</text>
<text x="576.9" y="276.9" font-size="12" text-anchor="middle" class="lb">Bosanska</text>
<text x="576.9" y="288.8" font-size="12" text-anchor="middle" class="lb">Dubica</text>
<text x="797.2" y="279.9" font-size="13.5" text-anchor="middle" class="lb">Slavonski</text>
<text x="797.2" y="293.9" font-size="13.5" text-anchor="middle" class="lb">Brod</text>
<text x="659.0" y="298.3" font-size="12" text-anchor="middle" class="lb">Gradiška</text>
<text x="559.3" y="341.8" font-size="12" text-anchor="middle" class="lb">Prijedor</text>
<text x="850.6" y="347.8" font-size="12" text-anchor="middle" class="lb">Modriča</text>
<text x="777.9" y="359.0" font-size="12" text-anchor="middle" class="lb">Derventa</text>
<text x="871.6" y="369.2" font-size="12" text-anchor="middle" class="lb">Gradačac</text>
<text x="805.0" y="380.1" font-size="12" text-anchor="middle" class="lb">Kotorsko</text>
<text x="651.3" y="393.7" font-size="14" text-anchor="middle" class="lb">Banja Luka</text>
<text x="552.3" y="400.4" font-size="12" text-anchor="middle" class="lb">Sanski Most</text>
<text x="810.9" y="404.3" font-size="13" text-anchor="middle" class="lb">Doboj</text>
<text x="850.6" y="429.2" font-size="12" text-anchor="middle" class="lb">Gračanica</text>
<text x="769.2" y="438.3" font-size="12" text-anchor="middle" class="lb">Tešnić</text>
<text x="613.7" y="457.3" font-size="12" text-anchor="middle" class="lb">Agino Selo</text>
<text x="889.2" y="473.0" font-size="12" text-anchor="middle" class="lb">Lukavac</text>
<text x="580.4" y="478.3" font-size="12" text-anchor="middle" class="lb">Donji Ribnik</text>
<text x="820.7" y="480.1" font-size="12" text-anchor="middle" class="lb">Zavidovići</text>
<text x="662.1" y="506.3" font-size="12" text-anchor="middle" class="lb">Jajce</text>
<text x="782.1" y="540.1" font-size="12" text-anchor="middle" class="lb">Zenica</text>
<text x="734.1" y="535.5" font-size="12" text-anchor="middle" class="lb">Travnik</text>
<text x="815.8" y="560.1" font-size="12" text-anchor="middle" class="lb">Kakanj</text>
<text x="692.7" y="578.3" font-size="12" text-anchor="middle" class="lb">Bugojno</text>
<text x="1049.9" y="259.3" font-size="12" text-anchor="middle" class="lb">Bačka</text>
<text x="1132.3" y="266.9" font-size="14.5" text-anchor="middle" class="lb">Novi Sad</text>
<text x="1049.9" y="271.6" font-size="12" text-anchor="middle" class="lb">Palanka</text>
<text x="942.1" y="280.1" font-size="12" text-anchor="middle" class="lb">Vinkovci</text>
<text x="1018.3" y="302.9" font-size="12" text-anchor="middle" class="lb">Šid</text>
<text x="1270.9" y="308.1" font-size="12" text-anchor="middle" class="lb">Kovacica</text>
<text x="923.5" y="317.3" font-size="12" text-anchor="middle" class="lb">Županja</text>
<text x="1173.4" y="323.2" font-size="12" text-anchor="middle" class="lb">Inđija</text>
<text x="1088.5" y="327.4" font-size="12" text-anchor="middle" class="lb">Sremska</text>
<text x="1088.5" y="340.1" font-size="12" text-anchor="middle" class="lb">Mitrovica</text>
<text x="1148.1" y="344.3" font-size="12" text-anchor="middle" class="lb">Ruma</text>
<text x="1189.5" y="356.5" font-size="12" text-anchor="middle" class="lb">Stara</text>
<text x="1189.5" y="369.5" font-size="12" text-anchor="middle" class="lb">Pazova</text>
<text x="1275.0" y="370.3" font-size="13" text-anchor="middle" class="lb">Pančevo</text>
<text x="1283.0" y="322.3" font-size="12" text-anchor="middle" class="lb">Bačka</text>
<text x="1283.0" y="334.3" font-size="12" text-anchor="middle" class="lb">Nova</text>
<text x="942.8" y="369.5" font-size="12" text-anchor="middle" class="lb">Brcko</text>
<text x="1209.5" y="392.5" font-size="14.5" text-anchor="middle" class="lb">Belgrade</text>
<text x="1104.2" y="399.3" font-size="12" text-anchor="middle" class="lb">Šabac</text>
<text x="1014.0" y="397.6" font-size="12" text-anchor="middle" class="lb">Bijeljina</text>
<text x="1290.0" y="409.2" font-size="12" text-anchor="middle" class="lb">Kaluđerica</text>
<text x="1021.8" y="423.2" font-size="12" text-anchor="middle" class="lb">Janja</text>
<text x="1248.1" y="430.2" font-size="12" text-anchor="middle" class="lb">Ripanj</text>
<text x="918.3" y="440.6" font-size="14.5" text-anchor="middle" class="lb">Tuzla</text>
<text x="894.0" y="455.7" font-size="14.5" text-anchor="middle" class="lb">Canton</text>
<text x="963.9" y="455.7" font-size="14.5" text-anchor="middle" class="lb">Rožanj</text>
<text x="1018.3" y="456.5" font-size="12" text-anchor="middle" class="lb">Loznica</text>
<text x="996.2" y="494.4" font-size="12" text-anchor="middle" class="lb">Zvornik</text>
<text x="1249.2" y="490.6" font-size="12" text-anchor="middle" class="lb">Mladenovac</text>
<text x="1208.5" y="511.6" font-size="12" text-anchor="middle" class="lb">Lazarevac</text>
<text x="1139.3" y="522.2" font-size="12" text-anchor="middle" class="lb">Valjevo</text>
<text x="1262.0" y="532.0" font-size="12" text-anchor="middle" class="lb">Aranđelovac</text>
<text x="1192.0" y="537.3" font-size="12" text-anchor="middle" class="lb">Mionica</text>
<text x="1242.8" y="571.6" font-size="12" text-anchor="middle" class="lb">Gornji</text>
<text x="1242.8" y="583.9" font-size="12" text-anchor="middle" class="lb">Milanovac</text>
<text x="306.4" y="596.1" font-size="12" text-anchor="middle" class="lb">Sukošan</text>
<text x="360.0" y="600.3" font-size="12" text-anchor="middle" class="lb">Benkovac</text>
<text x="329.2" y="624.2" font-size="12" text-anchor="middle" class="lb">Biograd</text>
<text x="329.2" y="636.5" font-size="12" text-anchor="middle" class="lb">na Moru</text>
<text x="459.3" y="628.4" font-size="12" text-anchor="middle" class="lb">Drniš</text>
<text x="390.6" y="652.3" font-size="12" text-anchor="middle" class="lb">Vodice</text>
<text x="411.6" y="678.4" font-size="14.5" text-anchor="middle" class="lb">Šibenik</text>
<text x="475.8" y="713.7" font-size="12" text-anchor="middle" class="lb">Trogir</text>
<text x="517.9" y="707.3" font-size="12" text-anchor="middle" class="lb">Solin</text>
<text x="510.9" y="736.5" font-size="15" text-anchor="middle" class="lb">Split</text>
<text x="510.9" y="816.1" font-size="12" text-anchor="middle" class="lb">Hvar</text>
<text x="463.5" y="827.7" font-size="12" text-anchor="middle" class="lb">Vis</text>
<text x="447.1" y="848.4" font-size="12" text-anchor="middle" class="lb">Komiža</text>
<text x="826.0" y="595.1" font-size="12" text-anchor="middle" class="lb">Visoko</text>
<text x="869.9" y="627.5" font-size="14.5" text-anchor="middle" class="lb">Sarajevo</text>
<text x="614.4" y="637.2" font-size="12" text-anchor="middle" class="lb">Livno</text>
<text x="849.5" y="652.5" font-size="12.5" text-anchor="middle" class="lb">Ilidža</text>
<text x="896.2" y="654.7" font-size="12" text-anchor="middle" class="lb">Pale</text>
<text x="797.9" y="657.2" font-size="12" text-anchor="middle" class="lb">Bradina</text>
<text x="547.0" y="666.5" font-size="12.5" text-anchor="middle" class="lb">Sinj</text>
<text x="651.3" y="731.9" font-size="12" text-anchor="middle" class="lb">Imotski</text>
<text x="771.6" y="740.7" font-size="12" text-anchor="middle" class="lb">Potoci</text>
<text x="675.1" y="758.2" font-size="12" text-anchor="middle" class="lb">Sovići</text>
<text x="735.8" y="767.2" font-size="14.5" text-anchor="middle" class="lb">Mostar</text>
<text x="616.5" y="768.9" font-size="12.5" text-anchor="middle" class="lb">Makarska</text>
<text x="775.1" y="779.3" font-size="12" text-anchor="middle" class="lb">Blagaj</text>
<text x="568.1" y="804.9" font-size="12" text-anchor="middle" class="lb">Stari Grad</text>
<text x="890.9" y="808.0" font-size="12" text-anchor="middle" class="lb">Avtovac</text>
<text x="731.3" y="829.8" font-size="13" text-anchor="middle" class="lb">Metković</text>
<text x="561.8" y="853.7" font-size="12" text-anchor="middle" class="lb">Vela Luka</text>
<text x="637.6" y="853.7" font-size="12" text-anchor="middle" class="lb">Korčula</text>
<text x="872.7" y="874.0" font-size="12" text-anchor="middle" class="lb">Bileća</text>
<text x="856.9" y="913.7" font-size="13" text-anchor="middle" class="lb">Trebinje</text>
<text x="1222.8" y="618.6" font-size="14" text-anchor="middle" class="lb">Čačak</text>
<text x="1131.6" y="629.1" font-size="14" text-anchor="middle" class="lb">Užice</text>
<text x="1030.6" y="647.0" font-size="12" text-anchor="middle" class="lb">Višegrad</text>
<text x="1165.0" y="648.8" font-size="13" text-anchor="middle" class="lb">Požega</text>
<text x="1290.0" y="660.7" font-size="14" text-anchor="middle" class="lb">Kraljevo</text>
<text x="1104.2" y="664.2" font-size="12" text-anchor="middle" class="lb">Zlatibor</text>
<text x="1177.2" y="670.5" font-size="12" text-anchor="middle" class="lb">Arilje</text>
<text x="972.7" y="676.2" font-size="13" text-anchor="middle" class="lb">Gorazde</text>
<text x="1201.8" y="697.0" font-size="12.5" text-anchor="middle" class="lb">Ivanjica</text>
<text x="1073.7" y="699.7" font-size="13" text-anchor="middle" class="lb">Priboj</text>
<text x="935.8" y="717.2" font-size="12" text-anchor="middle" class="lb">Foča</text>
<text x="1042.8" y="753.3" font-size="13" text-anchor="middle" class="lb">Pljevlja</text>
<text x="1269.2" y="768.9" font-size="12.5" text-anchor="middle" class="lb">Raška</text>
<text x="1159.3" y="776.0" font-size="12.5" text-anchor="middle" class="lb">Sjenica</text>
<text x="999.0" y="805.1" font-size="12.5" text-anchor="middle" class="lb">Žabljak</text>
<text x="1252.7" y="806.3" font-size="14" text-anchor="middle" class="lb">Novi Pazar</text>
<text x="1113.0" y="834.3" font-size="12" text-anchor="middle" class="lb">Bijelo Polje</text>
<text x="1083.2" y="854.7" font-size="12" text-anchor="middle" class="lb">Mojkovac</text>
<text x="1248.1" y="884.2" font-size="13" text-anchor="middle" class="lb">Istog</text>
<text x="1249.8" y="894.8" font-size="11" text-anchor="middle" class="lb">(Istok)</text>
<text x="1115.5" y="890.5" font-size="12" text-anchor="middle" class="lb">Berane</text>
<text x="966.4" y="900.0" font-size="13" text-anchor="middle" class="lb">Nikšić</text>
<text x="1240.0" y="916.3" font-size="12" text-anchor="middle" class="lb">Pejë</text>
<circle cx="395" cy="293.8" r="20" fill="#3a3a3a" opacity="0.68"/><circle cx="395" cy="293.8" r="15" fill="#3d3d3d"/><text x="395" y="298.1" font-size="13.2" fill="#fff" text-anchor="middle">7</text>
<circle cx="659" cy="302" r="20" fill="#3a3a3a" opacity="0.68"/><circle cx="659" cy="302" r="15" fill="#3d3d3d"/><text x="659" y="306.3" font-size="13.2" fill="#fff" text-anchor="middle">4</text>
<circle cx="822" cy="332" r="20" fill="#3a3a3a" opacity="0.68"/><circle cx="822" cy="332" r="15" fill="#3d3d3d"/><text x="822" y="336.3" font-size="13.2" fill="#fff" text-anchor="middle">6</text>
<circle cx="1018" cy="401" r="20" fill="#3a3a3a" opacity="0.68"/><circle cx="1018" cy="401" r="15" fill="#3d3d3d"/><text x="1018" y="405.3" font-size="13.2" fill="#fff" text-anchor="middle">2</text>
<circle cx="572" cy="462" r="20" fill="#3a3a3a" opacity="0.68"/><circle cx="572" cy="462" r="15" fill="#3d3d3d"/><text x="572" y="466.3" font-size="13.2" fill="#fff" text-anchor="middle">6</text>
<circle cx="499" cy="479" r="20" fill="#3a3a3a" opacity="0.68"/><circle cx="499" cy="479" r="15" fill="#3d3d3d"/><text x="499" y="483.3" font-size="13.2" fill="#fff" text-anchor="middle">4</text>
<circle cx="586" cy="583" r="20" fill="#3a3a3a" opacity="0.68"/><circle cx="586" cy="583" r="15" fill="#3d3d3d"/><text x="586" y="587.3" font-size="13.2" fill="#fff" text-anchor="middle">3</text>
<circle cx="783" cy="682" r="20" fill="#3a3a3a" opacity="0.68"/><circle cx="783" cy="682" r="15" fill="#3d3d3d"/><text x="783" y="686.3" font-size="13.2" fill="#fff" text-anchor="middle">9</text>
<circle cx="885" cy="829" r="20" fill="#3a3a3a" opacity="0.68"/><circle cx="885" cy="829" r="15" fill="#3d3d3d"/><text x="885" y="833.3" font-size="13.2" fill="#fff" text-anchor="middle">3</text>
<circle cx="470" cy="337.8" r="20" fill="rgb(241,211,87)" fill-opacity="0.6"/><circle cx="470" cy="337.8" r="15" fill="rgb(240,194,12)" fill-opacity="0.6"/><text x="470" y="342.1" font-size="13.2" fill="#222" text-anchor="middle">11</text>
<circle cx="557" cy="364" r="20" fill="rgb(241,211,87)" fill-opacity="0.6"/><circle cx="557" cy="364" r="15" fill="rgb(240,194,12)" fill-opacity="0.6"/><text x="557" y="368.3" font-size="13.2" fill="#222" text-anchor="middle">22</text>
<circle cx="904" cy="392" r="20" fill="rgb(241,211,87)" fill-opacity="0.6"/><circle cx="904" cy="392" r="15" fill="rgb(240,194,12)" fill-opacity="0.6"/><text x="904" y="396.3" font-size="13.2" fill="#222" text-anchor="middle">12</text>
<circle cx="662" cy="436" r="20" fill="rgb(241,211,87)" fill-opacity="0.6"/><circle cx="662" cy="436" r="15" fill="rgb(240,194,12)" fill-opacity="0.6"/><text x="662" y="440.3" font-size="13.2" fill="#222" text-anchor="middle">19</text>
<circle cx="973" cy="520" r="20" fill="rgb(241,211,87)" fill-opacity="0.6"/><circle cx="973" cy="520" r="15" fill="rgb(240,194,12)" fill-opacity="0.6"/><text x="973" y="524.3" font-size="13.2" fill="#222" text-anchor="middle">17</text>
<circle cx="1033" cy="562" r="20" fill="rgb(241,211,87)" fill-opacity="0.6"/><circle cx="1033" cy="562" r="15" fill="rgb(240,194,12)" fill-opacity="0.6"/><text x="1033" y="566.3" font-size="13.2" fill="#222" text-anchor="middle">19</text>
<circle cx="716" cy="595" r="20" fill="rgb(241,211,87)" fill-opacity="0.6"/><circle cx="716" cy="595" r="15" fill="rgb(240,194,12)" fill-opacity="0.6"/><text x="716" y="599.3" font-size="13.2" fill="#222" text-anchor="middle">16</text>
<circle cx="850" cy="591" r="20" fill="rgb(241,211,87)" fill-opacity="0.6"/><circle cx="850" cy="591" r="15" fill="rgb(240,194,12)" fill-opacity="0.6"/><text x="850" y="595.3" font-size="13.2" fill="#222" text-anchor="middle">35</text>
<circle cx="1000" cy="657" r="20" fill="rgb(241,211,87)" fill-opacity="0.6"/><circle cx="1000" cy="657" r="15" fill="rgb(240,194,12)" fill-opacity="0.6"/><text x="1000" y="661.3" font-size="13.2" fill="#222" text-anchor="middle">11</text>
<circle cx="924" cy="720" r="20" fill="rgb(241,211,87)" fill-opacity="0.6"/><circle cx="924" cy="720" r="15" fill="rgb(240,194,12)" fill-opacity="0.6"/><text x="924" y="724.3" font-size="13.2" fill="#222" text-anchor="middle">19</text>
<circle cx="769" cy="784" r="20" fill="rgb(241,211,87)" fill-opacity="0.6"/><circle cx="769" cy="784" r="15" fill="rgb(240,194,12)" fill-opacity="0.6"/><text x="769" y="788.3" font-size="13.2" fill="#222" text-anchor="middle">23</text>
<ellipse cx="783.5" cy="431.5" rx="10" ry="14" fill="#000" opacity="0.18" filter="url(#shadow)" transform="rotate(40 783.5 431.5)"/>
<path d="M769.5,441.5 L758.3,418.5 A12.3,12.3 0 1 1 780.7,418.5 Z" fill="#4b6651" stroke="#41594a" stroke-width="0.8"/><circle cx="769.5" cy="413.6" r="4.2" fill="#fff"/>
<ellipse cx="797.2" cy="535" rx="10" ry="14" fill="#000" opacity="0.18" filter="url(#shadow)" transform="rotate(40 797.2 535)"/>
<path d="M783.2,545 L772.0,522.0 A12.3,12.3 0 1 1 794.4000000000001,522.0 Z" fill="#4b6651" stroke="#41594a" stroke-width="0.8"/><circle cx="783.2" cy="517.1" r="4.2" fill="#fff"/>
<ellipse cx="667.4" cy="656" rx="10" ry="14" fill="#000" opacity="0.18" filter="url(#shadow)" transform="rotate(40 667.4 656)"/>
<path d="M653.4,666 L642.1999999999999,643.0 A12.3,12.3 0 1 1 664.6,643.0 Z" fill="#4b6651" stroke="#41594a" stroke-width="0.8"/><circle cx="653.4" cy="638.1" r="4.2" fill="#fff"/>
</svg>
<div id="band"></div>
<div style="position:absolute;left:13px;top:12px;width:23px;height:46px;background:rgba(255,255,255,0.85);border:1px solid #b5b5b5;border-radius:4px;box-shadow:0 0 2px rgba(0,0,0,0.2)"></div>
<div style="position:absolute;left:14px;top:35px;width:21px;height:1px;background:#aaa"></div>
<div style="position:absolute;left:20.5px;top:23px;width:10px;height:2.6px;background:#3e3e12"></div>
<div style="position:absolute;left:24.2px;top:19.2px;width:2.6px;height:10px;background:#3e3e12"></div>
<div style="position:absolute;left:20.5px;top:46px;width:10px;height:2.6px;background:#ccc"></div>
<div id="attr">Powered by <a>Leaflet</a> — Delivered by <a>Pauza.ba</a> — Map data © <a>Google</a></div>
</div>
</body></html>
